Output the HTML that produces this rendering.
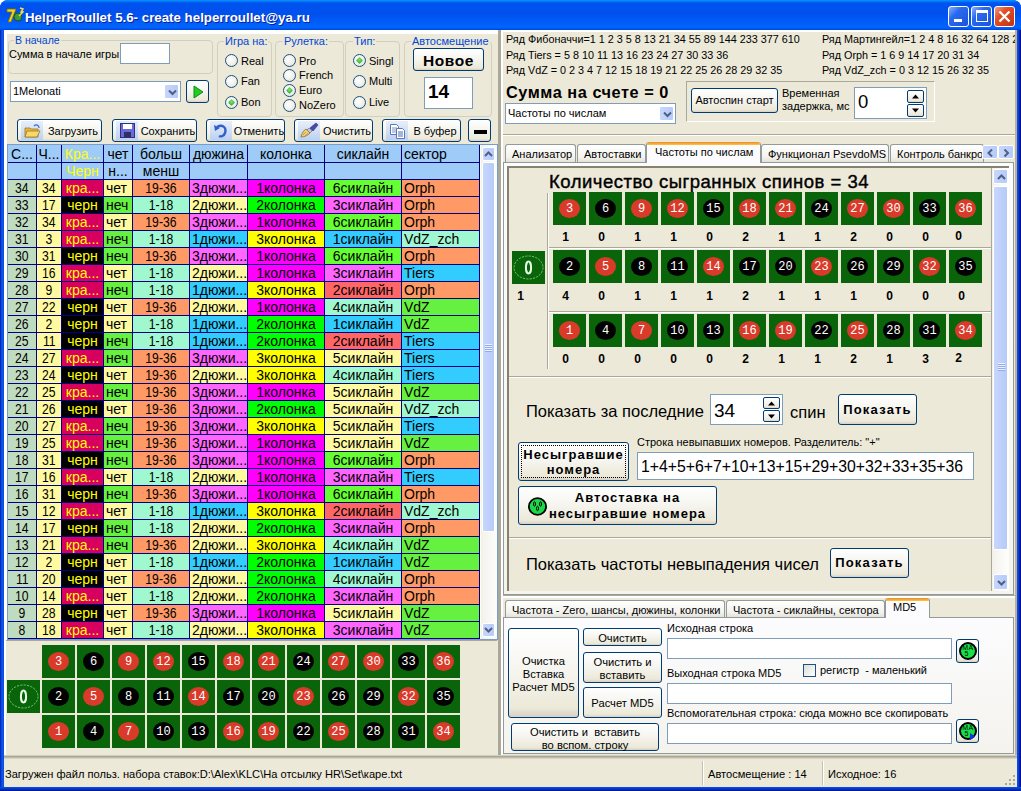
<!DOCTYPE html><html><head><meta charset="utf-8"><style>
*{margin:0;padding:0;box-sizing:border-box}
html,body{width:1021px;height:791px;overflow:hidden;background:#fff;font-family:"Liberation Sans",sans-serif;font-size:11px;color:#000}
div{position:absolute}
.t{white-space:nowrap;line-height:13px}
.btn{border:1px solid #003c74;border-radius:3px;background:linear-gradient(#fff 0%,#f5f4ee 50%,#ece9d8 90%,#d6d0c5 100%);}
.inp{background:#fff;border:1px solid #7f9db9}
.grp{border:1px solid #d0d0bf;border-radius:4px}
.gt{color:#0046d5;background:#ece9d8;padding:0 1px}
.radio{width:13px;height:13px;border-radius:50%;border:1px solid #1c5180;background:radial-gradient(circle at 40% 40%,#fff 0%,#eeeee8 60%,#d4d4cc 100%)}
.radio.on::after{content:"";position:absolute;left:3px;top:3px;width:5px;height:5px;border-radius:1px;transform:rotate(45deg);background:radial-gradient(circle at 40% 40%,#7ee86a,#21a121)}
.cell{overflow:hidden;white-space:nowrap;line-height:16px}
.rc{background:#0a640a}
.ball{border-radius:50%;color:#fff;font-size:12px;font-weight:normal;text-align:center;line-height:21px;font-family:"Liberation Mono",monospace;letter-spacing:0px;text-indent:0px}
.red{background:#d93a2a}
.blk{background:#000}
.cnt{font-weight:bold;font-size:12px;text-align:center;width:33px}
.sb{background:linear-gradient(to right,#f3f1ec,#fefefb)}
.arr{border:1px solid #fff;border-radius:2px;background:linear-gradient(to right,#c8d6fb,#b6cbf9)}
.tab{border:1px solid #919b9c;border-bottom:none;border-radius:3px 3px 0 0;background:linear-gradient(#fff,#f4f3ee 70%,#e4e2d8)}
</style></head><body><div style="left:0px;top:0px;width:1021px;height:791px;background:#0831d9;border-radius:8px 8px 0 0"></div><div style="left:0px;top:0px;width:1021px;height:30px;border-radius:8px 8px 0 0;background:linear-gradient(#0997ff 0%,#0053ee 10%,#0050ee 45%,#0062fa 85%,#0066ff 90%,#0053ee 97%,#003dd7 100%)"></div><div style="left:0px;top:30px;width:4px;height:761px;background:linear-gradient(to right,#001ea0,#0a48e0 35%,#0c5af0 70%,#0848dc)"></div><div style="left:1017px;top:30px;width:4px;height:761px;background:linear-gradient(to right,#0850f8,#0840e0 35%,#0020a8 65%,#000c80)"></div><div style="left:0px;top:787px;width:1021px;height:4px;background:linear-gradient(#0a50e8,#0038c8 50%,#00128a)"></div><div style="left:4px;top:30px;width:1013px;height:757px;background:#ece9d8"></div><div style="left:6px;top:7px;width:18px;height:18px"><svg width="18" height="18" viewBox="0 0 18 18"><path d="M1 2h9l-5 13H2l4-10H1z" fill="#e8d820" stroke="#8a6a00" stroke-width="0.8"/><circle cx="12" cy="10" r="4" fill="#3a9a3a" stroke="#204020" stroke-width="0.8"/><path d="M14 1l3 1-2 3 2 0-4 4" fill="none" stroke="#f0e040" stroke-width="1.4"/></svg></div><div class="t" style="left:25px;top:9px;color:#fff;font-weight:bold;font-size:13.3px;line-height:17px;text-shadow:1px 1px #0a1e9a">HelperRoullet 5.6- create helperroullet@ya.ru</div><div style="left:948px;top:6px;width:21px;height:21px;border:1px solid #fff;border-radius:3px;background:linear-gradient(135deg,#8ab0ff 0%,#2a6af0 35%,#1a52d8 100%)"><div style="left:5px;top:12px;width:8px;height:3px;background:#fff"></div></div><div style="left:971px;top:6px;width:21px;height:21px;border:1px solid #fff;border-radius:3px;background:linear-gradient(135deg,#8ab0ff 0%,#2a6af0 35%,#1a52d8 100%)"><div style="left:4px;top:3px;width:12px;height:12px;border:1px solid #fff;border-top-width:3px"></div></div><div style="left:994px;top:6px;width:21px;height:21px;border:1px solid #fff;border-radius:3px;background:linear-gradient(135deg,#f0a080 0%,#e0502a 35%,#c83010 100%)"><svg style="position:absolute;left:0;top:0" width="21" height="21"><path d="M4.5 4.5L14.5 14.5M14.5 4.5L4.5 14.5" stroke="#fff" stroke-width="2.3"/></svg></div><div style="left:4px;top:30px;width:2px;height:727px;background:#fff"></div><div style="left:6px;top:30px;width:492px;height:4px;background:#fff"></div><div style="left:6px;top:34px;width:1px;height:606px;background:#fff"></div><div class="grp" style="left:8px;top:40px;width:205px;height:34px;"></div><div class="t" style="left:14px;top:34px;color:#0046d5;background:#ece9d8;padding:0 1px;font-size:10.5px;line-height:12px">В начале</div><div class="t" style="left:9px;top:48px;line-height:13px">Сумма в начале игры</div><div class="inp" style="left:120px;top:43px;width:50px;height:21px;"></div><div class="inp" style="left:10px;top:81px;width:171px;height:21px"><div class="t" style="left:2px;top:3px">1Melonati</div><div class="arr" style="left:153px;top:2px;width:15px;height:15px"><svg style="position:absolute;left:3px;top:4px" width="9" height="7"><path d="M1 1.5l3.5 3.5 3.5-3.5" fill="none" stroke="#4d6185" stroke-width="2"/></svg></div></div><div class="btn" style="left:186px;top:80px;width:23px;height:23px"><svg style="position:absolute;left:6px;top:4px" width="12" height="14"><path d="M1 1l9 6-9 6z" fill="#22cc22" stroke="#138a13" stroke-width="1"/></svg></div><div class="grp" style="left:217px;top:41px;width:55px;height:76px"></div><div class="t" style="left:224px;top:34px;color:#0046d5;background:#ece9d8;padding:0 1px;font-size:11px;line-height:14px">Игра на:</div><div class="radio" style="left:225px;top:54px"></div><div class="t" style="left:241px;top:54px;font-size:11px;line-height:14px">Real</div><div class="radio" style="left:225px;top:75px"></div><div class="t" style="left:241px;top:74px;font-size:11px;line-height:14px">Fan</div><div class="radio on" style="left:225px;top:96px"></div><div class="t" style="left:241px;top:95px;font-size:11px;line-height:14px">Bon</div><div class="grp" style="left:275px;top:41px;width:69px;height:76px"></div><div class="t" style="left:283px;top:34px;color:#0046d5;background:#ece9d8;padding:0 1px;font-size:11px;line-height:14px">Рулетка:</div><div class="radio" style="left:283px;top:54px"></div><div class="t" style="left:299px;top:54px;font-size:11px;line-height:14px">Pro</div><div class="radio" style="left:283px;top:69px"></div><div class="t" style="left:299px;top:68px;font-size:11px;line-height:14px">French</div><div class="radio on" style="left:283px;top:84px"></div><div class="t" style="left:299px;top:83px;font-size:11px;line-height:14px">Euro</div><div class="radio" style="left:283px;top:99px"></div><div class="t" style="left:299px;top:98px;font-size:11px;line-height:14px">NoZero</div><div class="grp" style="left:345px;top:41px;width:55px;height:76px"></div><div class="t" style="left:353px;top:34px;color:#0046d5;background:#ece9d8;padding:0 1px;font-size:11px;line-height:14px">Тип:</div><div class="radio on" style="left:353px;top:54px"></div><div class="t" style="left:369px;top:54px;font-size:11px;line-height:14px">Singl</div><div class="radio" style="left:353px;top:75px"></div><div class="t" style="left:369px;top:74px;font-size:11px;line-height:14px">Multi</div><div class="radio" style="left:353px;top:96px"></div><div class="t" style="left:369px;top:95px;font-size:11px;line-height:14px">Live</div><div class="grp" style="left:404px;top:41px;width:88px;height:76px"></div><div class="t" style="left:411px;top:34px;color:#0046d5;background:#ece9d8;padding:0 1px;font-size:11px;line-height:14px">Автосмещение</div><div class="btn" style="left:413px;top:48px;width:71px;height:23px"><div class="t" style="left:0;width:69px;top:3px;text-align:center;font-size:15.5px;font-weight:bold;letter-spacing:0.6px;line-height:17px">Новое</div></div><div class="inp" style="left:424px;top:77px;width:49px;height:32px"><div class="t" style="left:3px;top:4px;font-size:19px;font-weight:bold;line-height:20px">14</div></div><div class="btn" style="left:17px;top:119px;width:85px;height:23px"><div style="left:3px;top:1px;width:22px;height:19px;background:linear-gradient(#e8effa,#bcd0f2)"><svg style="position:absolute;left:3px;top:2px" width="18" height="16"><path d="M1 5h5l1 1h7v8H1z" fill="#e8b840" stroke="#a07820" stroke-width="0.8"/><path d="M3 8h13l-3 6H1z" fill="#f8d868" stroke="#a07820" stroke-width="0.8"/><path d="M10 3c2-2 5-1 5 2" fill="none" stroke="#3070d0" stroke-width="1.2"/></svg></div><div class="t" style="left:26px;width:58px;text-align:center;top:4px;font-size:11px;line-height:14px">Загрузить</div></div><div class="btn" style="left:112px;top:119px;width:85px;height:23px"><div style="left:3px;top:1px;width:22px;height:19px;background:linear-gradient(#e8effa,#bcd0f2)"><svg style="position:absolute;left:4px;top:2px" width="15" height="15"><rect x="0.5" y="0.5" width="14" height="14" fill="#6a6ad8" stroke="#303080"/><rect x="3" y="1" width="9" height="5" fill="#fff"/><rect x="4" y="9" width="7" height="5" fill="#303060"/></svg></div><div class="t" style="left:26px;width:58px;text-align:center;top:4px;font-size:11px;line-height:14px">Сохранить</div></div><div class="btn" style="left:206px;top:119px;width:79px;height:23px"><div style="left:3px;top:1px;width:22px;height:19px;background:linear-gradient(#e8effa,#bcd0f2)"><svg style="position:absolute;left:3px;top:2px" width="16" height="15"><path d="M4 4c5-3 10 0 8 6-1 3-4 4-6 3" fill="none" stroke="#3060c8" stroke-width="2.4"/><path d="M1 2l1 6 5-3z" fill="#3060c8"/></svg></div><div class="t" style="left:26px;width:52px;text-align:center;top:4px;font-size:11px;line-height:14px">Отменить</div></div><div class="btn" style="left:294px;top:119px;width:79px;height:23px"><div style="left:3px;top:1px;width:22px;height:19px;background:linear-gradient(#e8effa,#bcd0f2)"><svg style="position:absolute;left:2px;top:1px" width="19" height="17"><path d="M1 15c1-4 3-7 5-8l4 4c-2 2-5 4-9 4z" fill="#f0d070" stroke="#8a7030" stroke-width="0.8"/><path d="M3 13l3-3M5 14l3-3" stroke="#b09040" stroke-width="0.7"/><path d="M7 8l2-2 3 3-2 2z" fill="#c8c8d8" stroke="#606080" stroke-width="0.6"/><path d="M10 6l6-5 2 2-5 6z" fill="#4a4aa8" stroke="#2a2a70" stroke-width="0.6"/></svg></div><div class="t" style="left:26px;width:52px;text-align:center;top:4px;font-size:11px;line-height:14px">Очистить</div></div><div class="btn" style="left:382px;top:119px;width:79px;height:23px"><div style="left:3px;top:1px;width:22px;height:19px;background:linear-gradient(#e8effa,#bcd0f2)"><svg style="position:absolute;left:3px;top:2px" width="17" height="16"><path d="M1.5 1.5h6l2 2v8h-8z" fill="#fff" stroke="#5a78b8"/><path d="M3 5h5M3 7h5M3 9h5" stroke="#5a78b8" stroke-width="0.8"/><path d="M7.5 5.5h6l2 2v8h-8z" fill="#fff" stroke="#5a78b8"/><path d="M9 9h5M9 11h5M9 13h5" stroke="#3a58a8" stroke-width="0.9"/></svg></div><div class="t" style="left:26px;width:52px;text-align:center;top:4px;font-size:11px;line-height:14px">В буфер</div></div><div class="btn" style="left:468px;top:119px;width:23px;height:23px"><div style="left:5px;top:10px;width:13px;height:4px;background:#000"></div></div><div style="left:7px;top:144px;width:491px;height:496px;border:1px solid #7a9ccc;background:#ece9d8"></div><div style="left:8px;top:145px;width:472px;height:494px;background:#000080"></div><div style="left:480px;top:145px;width:1px;height:494px;background:#fffff0"></div><div class="cell" style="left:8px;top:145px;width:28px;height:17px;background:#9ecbf8;color:#000;text-align:center;padding-left:0px;padding-top:2px;font-size:14px;line-height:15px">С...</div><div class="cell" style="left:37px;top:145px;width:24px;height:17px;background:#9ecbf8;color:#000;text-align:center;padding-left:0px;padding-top:2px;font-size:14px;line-height:15px">Ч...</div><div class="cell" style="left:62px;top:145px;width:41px;height:17px;background:#9ecbf8;color:#ffff00;text-align:center;padding-left:0px;padding-top:2px;font-size:14px;line-height:15px">Кра...</div><div class="cell" style="left:104px;top:145px;width:28px;height:17px;background:#9ecbf8;color:#000;text-align:center;padding-left:0px;padding-top:2px;font-size:14px;line-height:15px">чет</div><div class="cell" style="left:133px;top:145px;width:56px;height:17px;background:#9ecbf8;color:#000;text-align:center;padding-left:0px;padding-top:2px;font-size:14px;line-height:15px">больш</div><div class="cell" style="left:190px;top:145px;width:57px;height:17px;background:#9ecbf8;color:#000;text-align:center;padding-left:0px;padding-top:2px;font-size:14px;line-height:15px">дюжина</div><div class="cell" style="left:248px;top:145px;width:76px;height:17px;background:#9ecbf8;color:#000;text-align:center;padding-left:0px;padding-top:2px;font-size:14px;line-height:15px">колонка</div><div class="cell" style="left:325px;top:145px;width:76px;height:17px;background:#9ecbf8;color:#000;text-align:center;padding-left:0px;padding-top:2px;font-size:14px;line-height:15px">сиклайн</div><div class="cell" style="left:402px;top:145px;width:77px;height:17px;background:#9ecbf8;color:#000;text-align:left;padding-left:2px;padding-top:2px;font-size:14px;line-height:15px">сектор</div><div class="cell" style="left:8px;top:163px;width:28px;height:16px;background:#9ecbf8;color:#000;text-align:center;padding-left:0px;padding-top:1px;font-size:14px;line-height:15px"></div><div class="cell" style="left:37px;top:163px;width:24px;height:16px;background:#9ecbf8;color:#000;text-align:center;padding-left:0px;padding-top:1px;font-size:14px;line-height:15px"></div><div class="cell" style="left:62px;top:163px;width:41px;height:16px;background:#9ecbf8;color:#ffff00;text-align:center;padding-left:0px;padding-top:1px;font-size:14px;line-height:15px">Черн</div><div class="cell" style="left:104px;top:163px;width:28px;height:16px;background:#9ecbf8;color:#000;text-align:center;padding-left:0px;padding-top:1px;font-size:14px;line-height:15px">н...</div><div class="cell" style="left:133px;top:163px;width:56px;height:16px;background:#9ecbf8;color:#000;text-align:center;padding-left:0px;padding-top:1px;font-size:14px;line-height:15px">менш</div><div class="cell" style="left:190px;top:163px;width:57px;height:16px;background:#9ecbf8;color:#000;text-align:center;padding-left:0px;padding-top:1px;font-size:14px;line-height:15px"></div><div class="cell" style="left:248px;top:163px;width:76px;height:16px;background:#9ecbf8;color:#000;text-align:center;padding-left:0px;padding-top:1px;font-size:14px;line-height:15px"></div><div class="cell" style="left:325px;top:163px;width:76px;height:16px;background:#9ecbf8;color:#000;text-align:center;padding-left:0px;padding-top:1px;font-size:14px;line-height:15px"></div><div class="cell" style="left:402px;top:163px;width:77px;height:16px;background:#9ecbf8;color:#000;text-align:left;padding-left:2px;padding-top:1px;font-size:14px;line-height:15px"></div><div class="cell" style="left:8px;top:180px;width:28px;height:16px;background:#c0dcc0;color:#000;text-align:center;padding-left:0px;padding-top:1px;font-size:14px;line-height:15px"><span style="display:inline-block;transform:scaleX(0.87)">34</span></div><div class="cell" style="left:37px;top:180px;width:24px;height:16px;background:#fffaa0;color:#000;text-align:center;padding-left:0px;padding-top:1px;font-size:14px;line-height:15px"><span style="display:inline-block;transform:scaleX(0.87)">34</span></div><div class="cell" style="left:62px;top:180px;width:41px;height:16px;background:#d8005e;color:#ffff00;text-align:center;padding-left:0px;padding-top:1px;font-size:14px;line-height:15px">кра...</div><div class="cell" style="left:104px;top:180px;width:28px;height:16px;background:#fffaa0;color:#000;text-align:left;padding-left:2px;padding-top:1px;font-size:14px;line-height:15px">чет</div><div class="cell" style="left:133px;top:180px;width:56px;height:16px;background:#ff9966;color:#000;text-align:center;padding-left:0px;padding-top:1px;font-size:14px;line-height:15px"><span style="display:inline-block;transform:scaleX(0.87)">19-36</span></div><div class="cell" style="left:190px;top:180px;width:57px;height:16px;background:#ff66ff;color:#000;text-align:left;padding-left:2px;padding-top:1px;font-size:14px;line-height:15px">3дюжи...</div><div class="cell" style="left:248px;top:180px;width:76px;height:16px;background:#ff00ff;color:#000;text-align:center;padding-left:0px;padding-top:1px;font-size:14px;line-height:15px">1колонка</div><div class="cell" style="left:325px;top:180px;width:76px;height:16px;background:#66ff33;color:#000;text-align:center;padding-left:0px;padding-top:1px;font-size:14px;line-height:15px">6сиклайн</div><div class="cell" style="left:402px;top:180px;width:77px;height:16px;background:#ff9966;color:#000;text-align:left;padding-left:2px;padding-top:1px;font-size:14px;line-height:15px">Orph</div><div class="cell" style="left:8px;top:197px;width:28px;height:16px;background:#c0dcc0;color:#000;text-align:center;padding-left:0px;padding-top:1px;font-size:14px;line-height:15px"><span style="display:inline-block;transform:scaleX(0.87)">33</span></div><div class="cell" style="left:37px;top:197px;width:24px;height:16px;background:#fffaa0;color:#000;text-align:center;padding-left:0px;padding-top:1px;font-size:14px;line-height:15px"><span style="display:inline-block;transform:scaleX(0.87)">17</span></div><div class="cell" style="left:62px;top:197px;width:41px;height:16px;background:#000;color:#ffff00;text-align:center;padding-left:0px;padding-top:1px;font-size:14px;line-height:15px">черн</div><div class="cell" style="left:104px;top:197px;width:28px;height:16px;background:#66f040;color:#000;text-align:left;padding-left:2px;padding-top:1px;font-size:14px;line-height:15px">неч</div><div class="cell" style="left:133px;top:197px;width:56px;height:16px;background:#a0f8d0;color:#000;text-align:center;padding-left:0px;padding-top:1px;font-size:14px;line-height:15px"><span style="display:inline-block;transform:scaleX(0.87)">1-18</span></div><div class="cell" style="left:190px;top:197px;width:57px;height:16px;background:#fffaa0;color:#000;text-align:left;padding-left:2px;padding-top:1px;font-size:14px;line-height:15px">2дюжи...</div><div class="cell" style="left:248px;top:197px;width:76px;height:16px;background:#00ff00;color:#000;text-align:center;padding-left:0px;padding-top:1px;font-size:14px;line-height:15px">2колонка</div><div class="cell" style="left:325px;top:197px;width:76px;height:16px;background:#ff66ff;color:#000;text-align:center;padding-left:0px;padding-top:1px;font-size:14px;line-height:15px">3сиклайн</div><div class="cell" style="left:402px;top:197px;width:77px;height:16px;background:#ff9966;color:#000;text-align:left;padding-left:2px;padding-top:1px;font-size:14px;line-height:15px">Orph</div><div class="cell" style="left:8px;top:214px;width:28px;height:16px;background:#c0dcc0;color:#000;text-align:center;padding-left:0px;padding-top:1px;font-size:14px;line-height:15px"><span style="display:inline-block;transform:scaleX(0.87)">32</span></div><div class="cell" style="left:37px;top:214px;width:24px;height:16px;background:#fffaa0;color:#000;text-align:center;padding-left:0px;padding-top:1px;font-size:14px;line-height:15px"><span style="display:inline-block;transform:scaleX(0.87)">34</span></div><div class="cell" style="left:62px;top:214px;width:41px;height:16px;background:#d8005e;color:#ffff00;text-align:center;padding-left:0px;padding-top:1px;font-size:14px;line-height:15px">кра...</div><div class="cell" style="left:104px;top:214px;width:28px;height:16px;background:#fffaa0;color:#000;text-align:left;padding-left:2px;padding-top:1px;font-size:14px;line-height:15px">чет</div><div class="cell" style="left:133px;top:214px;width:56px;height:16px;background:#ff9966;color:#000;text-align:center;padding-left:0px;padding-top:1px;font-size:14px;line-height:15px"><span style="display:inline-block;transform:scaleX(0.87)">19-36</span></div><div class="cell" style="left:190px;top:214px;width:57px;height:16px;background:#ff66ff;color:#000;text-align:left;padding-left:2px;padding-top:1px;font-size:14px;line-height:15px">3дюжи...</div><div class="cell" style="left:248px;top:214px;width:76px;height:16px;background:#ff00ff;color:#000;text-align:center;padding-left:0px;padding-top:1px;font-size:14px;line-height:15px">1колонка</div><div class="cell" style="left:325px;top:214px;width:76px;height:16px;background:#66ff33;color:#000;text-align:center;padding-left:0px;padding-top:1px;font-size:14px;line-height:15px">6сиклайн</div><div class="cell" style="left:402px;top:214px;width:77px;height:16px;background:#ff9966;color:#000;text-align:left;padding-left:2px;padding-top:1px;font-size:14px;line-height:15px">Orph</div><div class="cell" style="left:8px;top:231px;width:28px;height:16px;background:#c0dcc0;color:#000;text-align:center;padding-left:0px;padding-top:1px;font-size:14px;line-height:15px"><span style="display:inline-block;transform:scaleX(0.87)">31</span></div><div class="cell" style="left:37px;top:231px;width:24px;height:16px;background:#fffaa0;color:#000;text-align:center;padding-left:0px;padding-top:1px;font-size:14px;line-height:15px"><span style="display:inline-block;transform:scaleX(0.87)">3</span></div><div class="cell" style="left:62px;top:231px;width:41px;height:16px;background:#d8005e;color:#ffff00;text-align:center;padding-left:0px;padding-top:1px;font-size:14px;line-height:15px">кра...</div><div class="cell" style="left:104px;top:231px;width:28px;height:16px;background:#66f040;color:#000;text-align:left;padding-left:2px;padding-top:1px;font-size:14px;line-height:15px">неч</div><div class="cell" style="left:133px;top:231px;width:56px;height:16px;background:#a0f8d0;color:#000;text-align:center;padding-left:0px;padding-top:1px;font-size:14px;line-height:15px"><span style="display:inline-block;transform:scaleX(0.87)">1-18</span></div><div class="cell" style="left:190px;top:231px;width:57px;height:16px;background:#33ccff;color:#000;text-align:left;padding-left:2px;padding-top:1px;font-size:14px;line-height:15px">1дюжи...</div><div class="cell" style="left:248px;top:231px;width:76px;height:16px;background:#ffff00;color:#000;text-align:center;padding-left:0px;padding-top:1px;font-size:14px;line-height:15px">3колонка</div><div class="cell" style="left:325px;top:231px;width:76px;height:16px;background:#33ccff;color:#000;text-align:center;padding-left:0px;padding-top:1px;font-size:14px;line-height:15px">1сиклайн</div><div class="cell" style="left:402px;top:231px;width:77px;height:16px;background:#a0f8d0;color:#000;text-align:left;padding-left:2px;padding-top:1px;font-size:14px;line-height:15px">VdZ_zch</div><div class="cell" style="left:8px;top:248px;width:28px;height:16px;background:#c0dcc0;color:#000;text-align:center;padding-left:0px;padding-top:1px;font-size:14px;line-height:15px"><span style="display:inline-block;transform:scaleX(0.87)">30</span></div><div class="cell" style="left:37px;top:248px;width:24px;height:16px;background:#fffaa0;color:#000;text-align:center;padding-left:0px;padding-top:1px;font-size:14px;line-height:15px"><span style="display:inline-block;transform:scaleX(0.87)">31</span></div><div class="cell" style="left:62px;top:248px;width:41px;height:16px;background:#000;color:#ffff00;text-align:center;padding-left:0px;padding-top:1px;font-size:14px;line-height:15px">черн</div><div class="cell" style="left:104px;top:248px;width:28px;height:16px;background:#66f040;color:#000;text-align:left;padding-left:2px;padding-top:1px;font-size:14px;line-height:15px">неч</div><div class="cell" style="left:133px;top:248px;width:56px;height:16px;background:#ff9966;color:#000;text-align:center;padding-left:0px;padding-top:1px;font-size:14px;line-height:15px"><span style="display:inline-block;transform:scaleX(0.87)">19-36</span></div><div class="cell" style="left:190px;top:248px;width:57px;height:16px;background:#ff66ff;color:#000;text-align:left;padding-left:2px;padding-top:1px;font-size:14px;line-height:15px">3дюжи...</div><div class="cell" style="left:248px;top:248px;width:76px;height:16px;background:#ff00ff;color:#000;text-align:center;padding-left:0px;padding-top:1px;font-size:14px;line-height:15px">1колонка</div><div class="cell" style="left:325px;top:248px;width:76px;height:16px;background:#66ff33;color:#000;text-align:center;padding-left:0px;padding-top:1px;font-size:14px;line-height:15px">6сиклайн</div><div class="cell" style="left:402px;top:248px;width:77px;height:16px;background:#ff9966;color:#000;text-align:left;padding-left:2px;padding-top:1px;font-size:14px;line-height:15px">Orph</div><div class="cell" style="left:8px;top:265px;width:28px;height:16px;background:#c0dcc0;color:#000;text-align:center;padding-left:0px;padding-top:1px;font-size:14px;line-height:15px"><span style="display:inline-block;transform:scaleX(0.87)">29</span></div><div class="cell" style="left:37px;top:265px;width:24px;height:16px;background:#fffaa0;color:#000;text-align:center;padding-left:0px;padding-top:1px;font-size:14px;line-height:15px"><span style="display:inline-block;transform:scaleX(0.87)">16</span></div><div class="cell" style="left:62px;top:265px;width:41px;height:16px;background:#d8005e;color:#ffff00;text-align:center;padding-left:0px;padding-top:1px;font-size:14px;line-height:15px">кра...</div><div class="cell" style="left:104px;top:265px;width:28px;height:16px;background:#fffaa0;color:#000;text-align:left;padding-left:2px;padding-top:1px;font-size:14px;line-height:15px">чет</div><div class="cell" style="left:133px;top:265px;width:56px;height:16px;background:#a0f8d0;color:#000;text-align:center;padding-left:0px;padding-top:1px;font-size:14px;line-height:15px"><span style="display:inline-block;transform:scaleX(0.87)">1-18</span></div><div class="cell" style="left:190px;top:265px;width:57px;height:16px;background:#fffaa0;color:#000;text-align:left;padding-left:2px;padding-top:1px;font-size:14px;line-height:15px">2дюжи...</div><div class="cell" style="left:248px;top:265px;width:76px;height:16px;background:#ff00ff;color:#000;text-align:center;padding-left:0px;padding-top:1px;font-size:14px;line-height:15px">1колонка</div><div class="cell" style="left:325px;top:265px;width:76px;height:16px;background:#ff66ff;color:#000;text-align:center;padding-left:0px;padding-top:1px;font-size:14px;line-height:15px">3сиклайн</div><div class="cell" style="left:402px;top:265px;width:77px;height:16px;background:#33ccff;color:#000;text-align:left;padding-left:2px;padding-top:1px;font-size:14px;line-height:15px">Tiers</div><div class="cell" style="left:8px;top:282px;width:28px;height:16px;background:#c0dcc0;color:#000;text-align:center;padding-left:0px;padding-top:1px;font-size:14px;line-height:15px"><span style="display:inline-block;transform:scaleX(0.87)">28</span></div><div class="cell" style="left:37px;top:282px;width:24px;height:16px;background:#fffaa0;color:#000;text-align:center;padding-left:0px;padding-top:1px;font-size:14px;line-height:15px"><span style="display:inline-block;transform:scaleX(0.87)">9</span></div><div class="cell" style="left:62px;top:282px;width:41px;height:16px;background:#d8005e;color:#ffff00;text-align:center;padding-left:0px;padding-top:1px;font-size:14px;line-height:15px">кра...</div><div class="cell" style="left:104px;top:282px;width:28px;height:16px;background:#66f040;color:#000;text-align:left;padding-left:2px;padding-top:1px;font-size:14px;line-height:15px">неч</div><div class="cell" style="left:133px;top:282px;width:56px;height:16px;background:#a0f8d0;color:#000;text-align:center;padding-left:0px;padding-top:1px;font-size:14px;line-height:15px"><span style="display:inline-block;transform:scaleX(0.87)">1-18</span></div><div class="cell" style="left:190px;top:282px;width:57px;height:16px;background:#33ccff;color:#000;text-align:left;padding-left:2px;padding-top:1px;font-size:14px;line-height:15px">1дюжи...</div><div class="cell" style="left:248px;top:282px;width:76px;height:16px;background:#ffff00;color:#000;text-align:center;padding-left:0px;padding-top:1px;font-size:14px;line-height:15px">3колонка</div><div class="cell" style="left:325px;top:282px;width:76px;height:16px;background:#ff6666;color:#000;text-align:center;padding-left:0px;padding-top:1px;font-size:14px;line-height:15px">2сиклайн</div><div class="cell" style="left:402px;top:282px;width:77px;height:16px;background:#ff9966;color:#000;text-align:left;padding-left:2px;padding-top:1px;font-size:14px;line-height:15px">Orph</div><div class="cell" style="left:8px;top:299px;width:28px;height:16px;background:#c0dcc0;color:#000;text-align:center;padding-left:0px;padding-top:1px;font-size:14px;line-height:15px"><span style="display:inline-block;transform:scaleX(0.87)">27</span></div><div class="cell" style="left:37px;top:299px;width:24px;height:16px;background:#fffaa0;color:#000;text-align:center;padding-left:0px;padding-top:1px;font-size:14px;line-height:15px"><span style="display:inline-block;transform:scaleX(0.87)">22</span></div><div class="cell" style="left:62px;top:299px;width:41px;height:16px;background:#000;color:#ffff00;text-align:center;padding-left:0px;padding-top:1px;font-size:14px;line-height:15px">черн</div><div class="cell" style="left:104px;top:299px;width:28px;height:16px;background:#fffaa0;color:#000;text-align:left;padding-left:2px;padding-top:1px;font-size:14px;line-height:15px">чет</div><div class="cell" style="left:133px;top:299px;width:56px;height:16px;background:#ff9966;color:#000;text-align:center;padding-left:0px;padding-top:1px;font-size:14px;line-height:15px"><span style="display:inline-block;transform:scaleX(0.87)">19-36</span></div><div class="cell" style="left:190px;top:299px;width:57px;height:16px;background:#fffaa0;color:#000;text-align:left;padding-left:2px;padding-top:1px;font-size:14px;line-height:15px">2дюжи...</div><div class="cell" style="left:248px;top:299px;width:76px;height:16px;background:#ff00ff;color:#000;text-align:center;padding-left:0px;padding-top:1px;font-size:14px;line-height:15px">1колонка</div><div class="cell" style="left:325px;top:299px;width:76px;height:16px;background:#a0f8d0;color:#000;text-align:center;padding-left:0px;padding-top:1px;font-size:14px;line-height:15px">4сиклайн</div><div class="cell" style="left:402px;top:299px;width:77px;height:16px;background:#66f040;color:#000;text-align:left;padding-left:2px;padding-top:1px;font-size:14px;line-height:15px">VdZ</div><div class="cell" style="left:8px;top:316px;width:28px;height:16px;background:#c0dcc0;color:#000;text-align:center;padding-left:0px;padding-top:1px;font-size:14px;line-height:15px"><span style="display:inline-block;transform:scaleX(0.87)">26</span></div><div class="cell" style="left:37px;top:316px;width:24px;height:16px;background:#fffaa0;color:#000;text-align:center;padding-left:0px;padding-top:1px;font-size:14px;line-height:15px"><span style="display:inline-block;transform:scaleX(0.87)">2</span></div><div class="cell" style="left:62px;top:316px;width:41px;height:16px;background:#000;color:#ffff00;text-align:center;padding-left:0px;padding-top:1px;font-size:14px;line-height:15px">черн</div><div class="cell" style="left:104px;top:316px;width:28px;height:16px;background:#fffaa0;color:#000;text-align:left;padding-left:2px;padding-top:1px;font-size:14px;line-height:15px">чет</div><div class="cell" style="left:133px;top:316px;width:56px;height:16px;background:#a0f8d0;color:#000;text-align:center;padding-left:0px;padding-top:1px;font-size:14px;line-height:15px"><span style="display:inline-block;transform:scaleX(0.87)">1-18</span></div><div class="cell" style="left:190px;top:316px;width:57px;height:16px;background:#33ccff;color:#000;text-align:left;padding-left:2px;padding-top:1px;font-size:14px;line-height:15px">1дюжи...</div><div class="cell" style="left:248px;top:316px;width:76px;height:16px;background:#00ff00;color:#000;text-align:center;padding-left:0px;padding-top:1px;font-size:14px;line-height:15px">2колонка</div><div class="cell" style="left:325px;top:316px;width:76px;height:16px;background:#33ccff;color:#000;text-align:center;padding-left:0px;padding-top:1px;font-size:14px;line-height:15px">1сиклайн</div><div class="cell" style="left:402px;top:316px;width:77px;height:16px;background:#66f040;color:#000;text-align:left;padding-left:2px;padding-top:1px;font-size:14px;line-height:15px">VdZ</div><div class="cell" style="left:8px;top:333px;width:28px;height:16px;background:#c0dcc0;color:#000;text-align:center;padding-left:0px;padding-top:1px;font-size:14px;line-height:15px"><span style="display:inline-block;transform:scaleX(0.87)">25</span></div><div class="cell" style="left:37px;top:333px;width:24px;height:16px;background:#fffaa0;color:#000;text-align:center;padding-left:0px;padding-top:1px;font-size:14px;line-height:15px"><span style="display:inline-block;transform:scaleX(0.87)">11</span></div><div class="cell" style="left:62px;top:333px;width:41px;height:16px;background:#000;color:#ffff00;text-align:center;padding-left:0px;padding-top:1px;font-size:14px;line-height:15px">черн</div><div class="cell" style="left:104px;top:333px;width:28px;height:16px;background:#66f040;color:#000;text-align:left;padding-left:2px;padding-top:1px;font-size:14px;line-height:15px">неч</div><div class="cell" style="left:133px;top:333px;width:56px;height:16px;background:#a0f8d0;color:#000;text-align:center;padding-left:0px;padding-top:1px;font-size:14px;line-height:15px"><span style="display:inline-block;transform:scaleX(0.87)">1-18</span></div><div class="cell" style="left:190px;top:333px;width:57px;height:16px;background:#33ccff;color:#000;text-align:left;padding-left:2px;padding-top:1px;font-size:14px;line-height:15px">1дюжи...</div><div class="cell" style="left:248px;top:333px;width:76px;height:16px;background:#00ff00;color:#000;text-align:center;padding-left:0px;padding-top:1px;font-size:14px;line-height:15px">2колонка</div><div class="cell" style="left:325px;top:333px;width:76px;height:16px;background:#ff6666;color:#000;text-align:center;padding-left:0px;padding-top:1px;font-size:14px;line-height:15px">2сиклайн</div><div class="cell" style="left:402px;top:333px;width:77px;height:16px;background:#33ccff;color:#000;text-align:left;padding-left:2px;padding-top:1px;font-size:14px;line-height:15px">Tiers</div><div class="cell" style="left:8px;top:350px;width:28px;height:16px;background:#c0dcc0;color:#000;text-align:center;padding-left:0px;padding-top:1px;font-size:14px;line-height:15px"><span style="display:inline-block;transform:scaleX(0.87)">24</span></div><div class="cell" style="left:37px;top:350px;width:24px;height:16px;background:#fffaa0;color:#000;text-align:center;padding-left:0px;padding-top:1px;font-size:14px;line-height:15px"><span style="display:inline-block;transform:scaleX(0.87)">27</span></div><div class="cell" style="left:62px;top:350px;width:41px;height:16px;background:#d8005e;color:#ffff00;text-align:center;padding-left:0px;padding-top:1px;font-size:14px;line-height:15px">кра...</div><div class="cell" style="left:104px;top:350px;width:28px;height:16px;background:#66f040;color:#000;text-align:left;padding-left:2px;padding-top:1px;font-size:14px;line-height:15px">неч</div><div class="cell" style="left:133px;top:350px;width:56px;height:16px;background:#ff9966;color:#000;text-align:center;padding-left:0px;padding-top:1px;font-size:14px;line-height:15px"><span style="display:inline-block;transform:scaleX(0.87)">19-36</span></div><div class="cell" style="left:190px;top:350px;width:57px;height:16px;background:#ff66ff;color:#000;text-align:left;padding-left:2px;padding-top:1px;font-size:14px;line-height:15px">3дюжи...</div><div class="cell" style="left:248px;top:350px;width:76px;height:16px;background:#ffff00;color:#000;text-align:center;padding-left:0px;padding-top:1px;font-size:14px;line-height:15px">3колонка</div><div class="cell" style="left:325px;top:350px;width:76px;height:16px;background:#fffaa0;color:#000;text-align:center;padding-left:0px;padding-top:1px;font-size:14px;line-height:15px">5сиклайн</div><div class="cell" style="left:402px;top:350px;width:77px;height:16px;background:#33ccff;color:#000;text-align:left;padding-left:2px;padding-top:1px;font-size:14px;line-height:15px">Tiers</div><div class="cell" style="left:8px;top:367px;width:28px;height:16px;background:#c0dcc0;color:#000;text-align:center;padding-left:0px;padding-top:1px;font-size:14px;line-height:15px"><span style="display:inline-block;transform:scaleX(0.87)">23</span></div><div class="cell" style="left:37px;top:367px;width:24px;height:16px;background:#fffaa0;color:#000;text-align:center;padding-left:0px;padding-top:1px;font-size:14px;line-height:15px"><span style="display:inline-block;transform:scaleX(0.87)">24</span></div><div class="cell" style="left:62px;top:367px;width:41px;height:16px;background:#000;color:#ffff00;text-align:center;padding-left:0px;padding-top:1px;font-size:14px;line-height:15px">черн</div><div class="cell" style="left:104px;top:367px;width:28px;height:16px;background:#fffaa0;color:#000;text-align:left;padding-left:2px;padding-top:1px;font-size:14px;line-height:15px">чет</div><div class="cell" style="left:133px;top:367px;width:56px;height:16px;background:#ff9966;color:#000;text-align:center;padding-left:0px;padding-top:1px;font-size:14px;line-height:15px"><span style="display:inline-block;transform:scaleX(0.87)">19-36</span></div><div class="cell" style="left:190px;top:367px;width:57px;height:16px;background:#fffaa0;color:#000;text-align:left;padding-left:2px;padding-top:1px;font-size:14px;line-height:15px">2дюжи...</div><div class="cell" style="left:248px;top:367px;width:76px;height:16px;background:#ffff00;color:#000;text-align:center;padding-left:0px;padding-top:1px;font-size:14px;line-height:15px">3колонка</div><div class="cell" style="left:325px;top:367px;width:76px;height:16px;background:#a0f8d0;color:#000;text-align:center;padding-left:0px;padding-top:1px;font-size:14px;line-height:15px">4сиклайн</div><div class="cell" style="left:402px;top:367px;width:77px;height:16px;background:#33ccff;color:#000;text-align:left;padding-left:2px;padding-top:1px;font-size:14px;line-height:15px">Tiers</div><div class="cell" style="left:8px;top:384px;width:28px;height:16px;background:#c0dcc0;color:#000;text-align:center;padding-left:0px;padding-top:1px;font-size:14px;line-height:15px"><span style="display:inline-block;transform:scaleX(0.87)">22</span></div><div class="cell" style="left:37px;top:384px;width:24px;height:16px;background:#fffaa0;color:#000;text-align:center;padding-left:0px;padding-top:1px;font-size:14px;line-height:15px"><span style="display:inline-block;transform:scaleX(0.87)">25</span></div><div class="cell" style="left:62px;top:384px;width:41px;height:16px;background:#d8005e;color:#ffff00;text-align:center;padding-left:0px;padding-top:1px;font-size:14px;line-height:15px">кра...</div><div class="cell" style="left:104px;top:384px;width:28px;height:16px;background:#66f040;color:#000;text-align:left;padding-left:2px;padding-top:1px;font-size:14px;line-height:15px">неч</div><div class="cell" style="left:133px;top:384px;width:56px;height:16px;background:#ff9966;color:#000;text-align:center;padding-left:0px;padding-top:1px;font-size:14px;line-height:15px"><span style="display:inline-block;transform:scaleX(0.87)">19-36</span></div><div class="cell" style="left:190px;top:384px;width:57px;height:16px;background:#ff66ff;color:#000;text-align:left;padding-left:2px;padding-top:1px;font-size:14px;line-height:15px">3дюжи...</div><div class="cell" style="left:248px;top:384px;width:76px;height:16px;background:#ff00ff;color:#000;text-align:center;padding-left:0px;padding-top:1px;font-size:14px;line-height:15px">1колонка</div><div class="cell" style="left:325px;top:384px;width:76px;height:16px;background:#fffaa0;color:#000;text-align:center;padding-left:0px;padding-top:1px;font-size:14px;line-height:15px">5сиклайн</div><div class="cell" style="left:402px;top:384px;width:77px;height:16px;background:#66f040;color:#000;text-align:left;padding-left:2px;padding-top:1px;font-size:14px;line-height:15px">VdZ</div><div class="cell" style="left:8px;top:401px;width:28px;height:16px;background:#c0dcc0;color:#000;text-align:center;padding-left:0px;padding-top:1px;font-size:14px;line-height:15px"><span style="display:inline-block;transform:scaleX(0.87)">21</span></div><div class="cell" style="left:37px;top:401px;width:24px;height:16px;background:#fffaa0;color:#000;text-align:center;padding-left:0px;padding-top:1px;font-size:14px;line-height:15px"><span style="display:inline-block;transform:scaleX(0.87)">26</span></div><div class="cell" style="left:62px;top:401px;width:41px;height:16px;background:#000;color:#ffff00;text-align:center;padding-left:0px;padding-top:1px;font-size:14px;line-height:15px">черн</div><div class="cell" style="left:104px;top:401px;width:28px;height:16px;background:#fffaa0;color:#000;text-align:left;padding-left:2px;padding-top:1px;font-size:14px;line-height:15px">чет</div><div class="cell" style="left:133px;top:401px;width:56px;height:16px;background:#ff9966;color:#000;text-align:center;padding-left:0px;padding-top:1px;font-size:14px;line-height:15px"><span style="display:inline-block;transform:scaleX(0.87)">19-36</span></div><div class="cell" style="left:190px;top:401px;width:57px;height:16px;background:#ff66ff;color:#000;text-align:left;padding-left:2px;padding-top:1px;font-size:14px;line-height:15px">3дюжи...</div><div class="cell" style="left:248px;top:401px;width:76px;height:16px;background:#00ff00;color:#000;text-align:center;padding-left:0px;padding-top:1px;font-size:14px;line-height:15px">2колонка</div><div class="cell" style="left:325px;top:401px;width:76px;height:16px;background:#fffaa0;color:#000;text-align:center;padding-left:0px;padding-top:1px;font-size:14px;line-height:15px">5сиклайн</div><div class="cell" style="left:402px;top:401px;width:77px;height:16px;background:#a0f8d0;color:#000;text-align:left;padding-left:2px;padding-top:1px;font-size:14px;line-height:15px">VdZ_zch</div><div class="cell" style="left:8px;top:418px;width:28px;height:16px;background:#c0dcc0;color:#000;text-align:center;padding-left:0px;padding-top:1px;font-size:14px;line-height:15px"><span style="display:inline-block;transform:scaleX(0.87)">20</span></div><div class="cell" style="left:37px;top:418px;width:24px;height:16px;background:#fffaa0;color:#000;text-align:center;padding-left:0px;padding-top:1px;font-size:14px;line-height:15px"><span style="display:inline-block;transform:scaleX(0.87)">27</span></div><div class="cell" style="left:62px;top:418px;width:41px;height:16px;background:#d8005e;color:#ffff00;text-align:center;padding-left:0px;padding-top:1px;font-size:14px;line-height:15px">кра...</div><div class="cell" style="left:104px;top:418px;width:28px;height:16px;background:#66f040;color:#000;text-align:left;padding-left:2px;padding-top:1px;font-size:14px;line-height:15px">неч</div><div class="cell" style="left:133px;top:418px;width:56px;height:16px;background:#ff9966;color:#000;text-align:center;padding-left:0px;padding-top:1px;font-size:14px;line-height:15px"><span style="display:inline-block;transform:scaleX(0.87)">19-36</span></div><div class="cell" style="left:190px;top:418px;width:57px;height:16px;background:#ff66ff;color:#000;text-align:left;padding-left:2px;padding-top:1px;font-size:14px;line-height:15px">3дюжи...</div><div class="cell" style="left:248px;top:418px;width:76px;height:16px;background:#ffff00;color:#000;text-align:center;padding-left:0px;padding-top:1px;font-size:14px;line-height:15px">3колонка</div><div class="cell" style="left:325px;top:418px;width:76px;height:16px;background:#fffaa0;color:#000;text-align:center;padding-left:0px;padding-top:1px;font-size:14px;line-height:15px">5сиклайн</div><div class="cell" style="left:402px;top:418px;width:77px;height:16px;background:#33ccff;color:#000;text-align:left;padding-left:2px;padding-top:1px;font-size:14px;line-height:15px">Tiers</div><div class="cell" style="left:8px;top:435px;width:28px;height:16px;background:#c0dcc0;color:#000;text-align:center;padding-left:0px;padding-top:1px;font-size:14px;line-height:15px"><span style="display:inline-block;transform:scaleX(0.87)">19</span></div><div class="cell" style="left:37px;top:435px;width:24px;height:16px;background:#fffaa0;color:#000;text-align:center;padding-left:0px;padding-top:1px;font-size:14px;line-height:15px"><span style="display:inline-block;transform:scaleX(0.87)">25</span></div><div class="cell" style="left:62px;top:435px;width:41px;height:16px;background:#d8005e;color:#ffff00;text-align:center;padding-left:0px;padding-top:1px;font-size:14px;line-height:15px">кра...</div><div class="cell" style="left:104px;top:435px;width:28px;height:16px;background:#66f040;color:#000;text-align:left;padding-left:2px;padding-top:1px;font-size:14px;line-height:15px">неч</div><div class="cell" style="left:133px;top:435px;width:56px;height:16px;background:#ff9966;color:#000;text-align:center;padding-left:0px;padding-top:1px;font-size:14px;line-height:15px"><span style="display:inline-block;transform:scaleX(0.87)">19-36</span></div><div class="cell" style="left:190px;top:435px;width:57px;height:16px;background:#ff66ff;color:#000;text-align:left;padding-left:2px;padding-top:1px;font-size:14px;line-height:15px">3дюжи...</div><div class="cell" style="left:248px;top:435px;width:76px;height:16px;background:#ff00ff;color:#000;text-align:center;padding-left:0px;padding-top:1px;font-size:14px;line-height:15px">1колонка</div><div class="cell" style="left:325px;top:435px;width:76px;height:16px;background:#fffaa0;color:#000;text-align:center;padding-left:0px;padding-top:1px;font-size:14px;line-height:15px">5сиклайн</div><div class="cell" style="left:402px;top:435px;width:77px;height:16px;background:#66f040;color:#000;text-align:left;padding-left:2px;padding-top:1px;font-size:14px;line-height:15px">VdZ</div><div class="cell" style="left:8px;top:452px;width:28px;height:16px;background:#c0dcc0;color:#000;text-align:center;padding-left:0px;padding-top:1px;font-size:14px;line-height:15px"><span style="display:inline-block;transform:scaleX(0.87)">18</span></div><div class="cell" style="left:37px;top:452px;width:24px;height:16px;background:#fffaa0;color:#000;text-align:center;padding-left:0px;padding-top:1px;font-size:14px;line-height:15px"><span style="display:inline-block;transform:scaleX(0.87)">31</span></div><div class="cell" style="left:62px;top:452px;width:41px;height:16px;background:#000;color:#ffff00;text-align:center;padding-left:0px;padding-top:1px;font-size:14px;line-height:15px">черн</div><div class="cell" style="left:104px;top:452px;width:28px;height:16px;background:#66f040;color:#000;text-align:left;padding-left:2px;padding-top:1px;font-size:14px;line-height:15px">неч</div><div class="cell" style="left:133px;top:452px;width:56px;height:16px;background:#ff9966;color:#000;text-align:center;padding-left:0px;padding-top:1px;font-size:14px;line-height:15px"><span style="display:inline-block;transform:scaleX(0.87)">19-36</span></div><div class="cell" style="left:190px;top:452px;width:57px;height:16px;background:#ff66ff;color:#000;text-align:left;padding-left:2px;padding-top:1px;font-size:14px;line-height:15px">3дюжи...</div><div class="cell" style="left:248px;top:452px;width:76px;height:16px;background:#ff00ff;color:#000;text-align:center;padding-left:0px;padding-top:1px;font-size:14px;line-height:15px">1колонка</div><div class="cell" style="left:325px;top:452px;width:76px;height:16px;background:#66ff33;color:#000;text-align:center;padding-left:0px;padding-top:1px;font-size:14px;line-height:15px">6сиклайн</div><div class="cell" style="left:402px;top:452px;width:77px;height:16px;background:#ff9966;color:#000;text-align:left;padding-left:2px;padding-top:1px;font-size:14px;line-height:15px">Orph</div><div class="cell" style="left:8px;top:469px;width:28px;height:16px;background:#c0dcc0;color:#000;text-align:center;padding-left:0px;padding-top:1px;font-size:14px;line-height:15px"><span style="display:inline-block;transform:scaleX(0.87)">17</span></div><div class="cell" style="left:37px;top:469px;width:24px;height:16px;background:#fffaa0;color:#000;text-align:center;padding-left:0px;padding-top:1px;font-size:14px;line-height:15px"><span style="display:inline-block;transform:scaleX(0.87)">16</span></div><div class="cell" style="left:62px;top:469px;width:41px;height:16px;background:#d8005e;color:#ffff00;text-align:center;padding-left:0px;padding-top:1px;font-size:14px;line-height:15px">кра...</div><div class="cell" style="left:104px;top:469px;width:28px;height:16px;background:#fffaa0;color:#000;text-align:left;padding-left:2px;padding-top:1px;font-size:14px;line-height:15px">чет</div><div class="cell" style="left:133px;top:469px;width:56px;height:16px;background:#a0f8d0;color:#000;text-align:center;padding-left:0px;padding-top:1px;font-size:14px;line-height:15px"><span style="display:inline-block;transform:scaleX(0.87)">1-18</span></div><div class="cell" style="left:190px;top:469px;width:57px;height:16px;background:#fffaa0;color:#000;text-align:left;padding-left:2px;padding-top:1px;font-size:14px;line-height:15px">2дюжи...</div><div class="cell" style="left:248px;top:469px;width:76px;height:16px;background:#ff00ff;color:#000;text-align:center;padding-left:0px;padding-top:1px;font-size:14px;line-height:15px">1колонка</div><div class="cell" style="left:325px;top:469px;width:76px;height:16px;background:#ff66ff;color:#000;text-align:center;padding-left:0px;padding-top:1px;font-size:14px;line-height:15px">3сиклайн</div><div class="cell" style="left:402px;top:469px;width:77px;height:16px;background:#33ccff;color:#000;text-align:left;padding-left:2px;padding-top:1px;font-size:14px;line-height:15px">Tiers</div><div class="cell" style="left:8px;top:486px;width:28px;height:16px;background:#c0dcc0;color:#000;text-align:center;padding-left:0px;padding-top:1px;font-size:14px;line-height:15px"><span style="display:inline-block;transform:scaleX(0.87)">16</span></div><div class="cell" style="left:37px;top:486px;width:24px;height:16px;background:#fffaa0;color:#000;text-align:center;padding-left:0px;padding-top:1px;font-size:14px;line-height:15px"><span style="display:inline-block;transform:scaleX(0.87)">31</span></div><div class="cell" style="left:62px;top:486px;width:41px;height:16px;background:#000;color:#ffff00;text-align:center;padding-left:0px;padding-top:1px;font-size:14px;line-height:15px">черн</div><div class="cell" style="left:104px;top:486px;width:28px;height:16px;background:#66f040;color:#000;text-align:left;padding-left:2px;padding-top:1px;font-size:14px;line-height:15px">неч</div><div class="cell" style="left:133px;top:486px;width:56px;height:16px;background:#ff9966;color:#000;text-align:center;padding-left:0px;padding-top:1px;font-size:14px;line-height:15px"><span style="display:inline-block;transform:scaleX(0.87)">19-36</span></div><div class="cell" style="left:190px;top:486px;width:57px;height:16px;background:#ff66ff;color:#000;text-align:left;padding-left:2px;padding-top:1px;font-size:14px;line-height:15px">3дюжи...</div><div class="cell" style="left:248px;top:486px;width:76px;height:16px;background:#ff00ff;color:#000;text-align:center;padding-left:0px;padding-top:1px;font-size:14px;line-height:15px">1колонка</div><div class="cell" style="left:325px;top:486px;width:76px;height:16px;background:#66ff33;color:#000;text-align:center;padding-left:0px;padding-top:1px;font-size:14px;line-height:15px">6сиклайн</div><div class="cell" style="left:402px;top:486px;width:77px;height:16px;background:#ff9966;color:#000;text-align:left;padding-left:2px;padding-top:1px;font-size:14px;line-height:15px">Orph</div><div class="cell" style="left:8px;top:503px;width:28px;height:16px;background:#c0dcc0;color:#000;text-align:center;padding-left:0px;padding-top:1px;font-size:14px;line-height:15px"><span style="display:inline-block;transform:scaleX(0.87)">15</span></div><div class="cell" style="left:37px;top:503px;width:24px;height:16px;background:#fffaa0;color:#000;text-align:center;padding-left:0px;padding-top:1px;font-size:14px;line-height:15px"><span style="display:inline-block;transform:scaleX(0.87)">12</span></div><div class="cell" style="left:62px;top:503px;width:41px;height:16px;background:#d8005e;color:#ffff00;text-align:center;padding-left:0px;padding-top:1px;font-size:14px;line-height:15px">кра...</div><div class="cell" style="left:104px;top:503px;width:28px;height:16px;background:#fffaa0;color:#000;text-align:left;padding-left:2px;padding-top:1px;font-size:14px;line-height:15px">чет</div><div class="cell" style="left:133px;top:503px;width:56px;height:16px;background:#a0f8d0;color:#000;text-align:center;padding-left:0px;padding-top:1px;font-size:14px;line-height:15px"><span style="display:inline-block;transform:scaleX(0.87)">1-18</span></div><div class="cell" style="left:190px;top:503px;width:57px;height:16px;background:#33ccff;color:#000;text-align:left;padding-left:2px;padding-top:1px;font-size:14px;line-height:15px">1дюжи...</div><div class="cell" style="left:248px;top:503px;width:76px;height:16px;background:#ffff00;color:#000;text-align:center;padding-left:0px;padding-top:1px;font-size:14px;line-height:15px">3колонка</div><div class="cell" style="left:325px;top:503px;width:76px;height:16px;background:#ff6666;color:#000;text-align:center;padding-left:0px;padding-top:1px;font-size:14px;line-height:15px">2сиклайн</div><div class="cell" style="left:402px;top:503px;width:77px;height:16px;background:#a0f8d0;color:#000;text-align:left;padding-left:2px;padding-top:1px;font-size:14px;line-height:15px">VdZ_zch</div><div class="cell" style="left:8px;top:520px;width:28px;height:16px;background:#c0dcc0;color:#000;text-align:center;padding-left:0px;padding-top:1px;font-size:14px;line-height:15px"><span style="display:inline-block;transform:scaleX(0.87)">14</span></div><div class="cell" style="left:37px;top:520px;width:24px;height:16px;background:#fffaa0;color:#000;text-align:center;padding-left:0px;padding-top:1px;font-size:14px;line-height:15px"><span style="display:inline-block;transform:scaleX(0.87)">17</span></div><div class="cell" style="left:62px;top:520px;width:41px;height:16px;background:#000;color:#ffff00;text-align:center;padding-left:0px;padding-top:1px;font-size:14px;line-height:15px">черн</div><div class="cell" style="left:104px;top:520px;width:28px;height:16px;background:#66f040;color:#000;text-align:left;padding-left:2px;padding-top:1px;font-size:14px;line-height:15px">неч</div><div class="cell" style="left:133px;top:520px;width:56px;height:16px;background:#a0f8d0;color:#000;text-align:center;padding-left:0px;padding-top:1px;font-size:14px;line-height:15px"><span style="display:inline-block;transform:scaleX(0.87)">1-18</span></div><div class="cell" style="left:190px;top:520px;width:57px;height:16px;background:#fffaa0;color:#000;text-align:left;padding-left:2px;padding-top:1px;font-size:14px;line-height:15px">2дюжи...</div><div class="cell" style="left:248px;top:520px;width:76px;height:16px;background:#00ff00;color:#000;text-align:center;padding-left:0px;padding-top:1px;font-size:14px;line-height:15px">2колонка</div><div class="cell" style="left:325px;top:520px;width:76px;height:16px;background:#ff66ff;color:#000;text-align:center;padding-left:0px;padding-top:1px;font-size:14px;line-height:15px">3сиклайн</div><div class="cell" style="left:402px;top:520px;width:77px;height:16px;background:#ff9966;color:#000;text-align:left;padding-left:2px;padding-top:1px;font-size:14px;line-height:15px">Orph</div><div class="cell" style="left:8px;top:537px;width:28px;height:16px;background:#c0dcc0;color:#000;text-align:center;padding-left:0px;padding-top:1px;font-size:14px;line-height:15px"><span style="display:inline-block;transform:scaleX(0.87)">13</span></div><div class="cell" style="left:37px;top:537px;width:24px;height:16px;background:#fffaa0;color:#000;text-align:center;padding-left:0px;padding-top:1px;font-size:14px;line-height:15px"><span style="display:inline-block;transform:scaleX(0.87)">21</span></div><div class="cell" style="left:62px;top:537px;width:41px;height:16px;background:#d8005e;color:#ffff00;text-align:center;padding-left:0px;padding-top:1px;font-size:14px;line-height:15px">кра...</div><div class="cell" style="left:104px;top:537px;width:28px;height:16px;background:#66f040;color:#000;text-align:left;padding-left:2px;padding-top:1px;font-size:14px;line-height:15px">неч</div><div class="cell" style="left:133px;top:537px;width:56px;height:16px;background:#ff9966;color:#000;text-align:center;padding-left:0px;padding-top:1px;font-size:14px;line-height:15px"><span style="display:inline-block;transform:scaleX(0.87)">19-36</span></div><div class="cell" style="left:190px;top:537px;width:57px;height:16px;background:#fffaa0;color:#000;text-align:left;padding-left:2px;padding-top:1px;font-size:14px;line-height:15px">2дюжи...</div><div class="cell" style="left:248px;top:537px;width:76px;height:16px;background:#ffff00;color:#000;text-align:center;padding-left:0px;padding-top:1px;font-size:14px;line-height:15px">3колонка</div><div class="cell" style="left:325px;top:537px;width:76px;height:16px;background:#a0f8d0;color:#000;text-align:center;padding-left:0px;padding-top:1px;font-size:14px;line-height:15px">4сиклайн</div><div class="cell" style="left:402px;top:537px;width:77px;height:16px;background:#66f040;color:#000;text-align:left;padding-left:2px;padding-top:1px;font-size:14px;line-height:15px">VdZ</div><div class="cell" style="left:8px;top:554px;width:28px;height:16px;background:#c0dcc0;color:#000;text-align:center;padding-left:0px;padding-top:1px;font-size:14px;line-height:15px"><span style="display:inline-block;transform:scaleX(0.87)">12</span></div><div class="cell" style="left:37px;top:554px;width:24px;height:16px;background:#fffaa0;color:#000;text-align:center;padding-left:0px;padding-top:1px;font-size:14px;line-height:15px"><span style="display:inline-block;transform:scaleX(0.87)">2</span></div><div class="cell" style="left:62px;top:554px;width:41px;height:16px;background:#000;color:#ffff00;text-align:center;padding-left:0px;padding-top:1px;font-size:14px;line-height:15px">черн</div><div class="cell" style="left:104px;top:554px;width:28px;height:16px;background:#fffaa0;color:#000;text-align:left;padding-left:2px;padding-top:1px;font-size:14px;line-height:15px">чет</div><div class="cell" style="left:133px;top:554px;width:56px;height:16px;background:#a0f8d0;color:#000;text-align:center;padding-left:0px;padding-top:1px;font-size:14px;line-height:15px"><span style="display:inline-block;transform:scaleX(0.87)">1-18</span></div><div class="cell" style="left:190px;top:554px;width:57px;height:16px;background:#33ccff;color:#000;text-align:left;padding-left:2px;padding-top:1px;font-size:14px;line-height:15px">1дюжи...</div><div class="cell" style="left:248px;top:554px;width:76px;height:16px;background:#00ff00;color:#000;text-align:center;padding-left:0px;padding-top:1px;font-size:14px;line-height:15px">2колонка</div><div class="cell" style="left:325px;top:554px;width:76px;height:16px;background:#33ccff;color:#000;text-align:center;padding-left:0px;padding-top:1px;font-size:14px;line-height:15px">1сиклайн</div><div class="cell" style="left:402px;top:554px;width:77px;height:16px;background:#66f040;color:#000;text-align:left;padding-left:2px;padding-top:1px;font-size:14px;line-height:15px">VdZ</div><div class="cell" style="left:8px;top:571px;width:28px;height:16px;background:#c0dcc0;color:#000;text-align:center;padding-left:0px;padding-top:1px;font-size:14px;line-height:15px"><span style="display:inline-block;transform:scaleX(0.87)">11</span></div><div class="cell" style="left:37px;top:571px;width:24px;height:16px;background:#fffaa0;color:#000;text-align:center;padding-left:0px;padding-top:1px;font-size:14px;line-height:15px"><span style="display:inline-block;transform:scaleX(0.87)">20</span></div><div class="cell" style="left:62px;top:571px;width:41px;height:16px;background:#000;color:#ffff00;text-align:center;padding-left:0px;padding-top:1px;font-size:14px;line-height:15px">черн</div><div class="cell" style="left:104px;top:571px;width:28px;height:16px;background:#fffaa0;color:#000;text-align:left;padding-left:2px;padding-top:1px;font-size:14px;line-height:15px">чет</div><div class="cell" style="left:133px;top:571px;width:56px;height:16px;background:#ff9966;color:#000;text-align:center;padding-left:0px;padding-top:1px;font-size:14px;line-height:15px"><span style="display:inline-block;transform:scaleX(0.87)">19-36</span></div><div class="cell" style="left:190px;top:571px;width:57px;height:16px;background:#fffaa0;color:#000;text-align:left;padding-left:2px;padding-top:1px;font-size:14px;line-height:15px">2дюжи...</div><div class="cell" style="left:248px;top:571px;width:76px;height:16px;background:#00ff00;color:#000;text-align:center;padding-left:0px;padding-top:1px;font-size:14px;line-height:15px">2колонка</div><div class="cell" style="left:325px;top:571px;width:76px;height:16px;background:#a0f8d0;color:#000;text-align:center;padding-left:0px;padding-top:1px;font-size:14px;line-height:15px">4сиклайн</div><div class="cell" style="left:402px;top:571px;width:77px;height:16px;background:#ff9966;color:#000;text-align:left;padding-left:2px;padding-top:1px;font-size:14px;line-height:15px">Orph</div><div class="cell" style="left:8px;top:588px;width:28px;height:16px;background:#c0dcc0;color:#000;text-align:center;padding-left:0px;padding-top:1px;font-size:14px;line-height:15px"><span style="display:inline-block;transform:scaleX(0.87)">10</span></div><div class="cell" style="left:37px;top:588px;width:24px;height:16px;background:#fffaa0;color:#000;text-align:center;padding-left:0px;padding-top:1px;font-size:14px;line-height:15px"><span style="display:inline-block;transform:scaleX(0.87)">14</span></div><div class="cell" style="left:62px;top:588px;width:41px;height:16px;background:#d8005e;color:#ffff00;text-align:center;padding-left:0px;padding-top:1px;font-size:14px;line-height:15px">кра...</div><div class="cell" style="left:104px;top:588px;width:28px;height:16px;background:#fffaa0;color:#000;text-align:left;padding-left:2px;padding-top:1px;font-size:14px;line-height:15px">чет</div><div class="cell" style="left:133px;top:588px;width:56px;height:16px;background:#a0f8d0;color:#000;text-align:center;padding-left:0px;padding-top:1px;font-size:14px;line-height:15px"><span style="display:inline-block;transform:scaleX(0.87)">1-18</span></div><div class="cell" style="left:190px;top:588px;width:57px;height:16px;background:#fffaa0;color:#000;text-align:left;padding-left:2px;padding-top:1px;font-size:14px;line-height:15px">2дюжи...</div><div class="cell" style="left:248px;top:588px;width:76px;height:16px;background:#00ff00;color:#000;text-align:center;padding-left:0px;padding-top:1px;font-size:14px;line-height:15px">2колонка</div><div class="cell" style="left:325px;top:588px;width:76px;height:16px;background:#ff66ff;color:#000;text-align:center;padding-left:0px;padding-top:1px;font-size:14px;line-height:15px">3сиклайн</div><div class="cell" style="left:402px;top:588px;width:77px;height:16px;background:#ff9966;color:#000;text-align:left;padding-left:2px;padding-top:1px;font-size:14px;line-height:15px">Orph</div><div class="cell" style="left:8px;top:605px;width:28px;height:16px;background:#c0dcc0;color:#000;text-align:center;padding-left:0px;padding-top:1px;font-size:14px;line-height:15px"><span style="display:inline-block;transform:scaleX(0.87)">9</span></div><div class="cell" style="left:37px;top:605px;width:24px;height:16px;background:#fffaa0;color:#000;text-align:center;padding-left:0px;padding-top:1px;font-size:14px;line-height:15px"><span style="display:inline-block;transform:scaleX(0.87)">28</span></div><div class="cell" style="left:62px;top:605px;width:41px;height:16px;background:#000;color:#ffff00;text-align:center;padding-left:0px;padding-top:1px;font-size:14px;line-height:15px">черн</div><div class="cell" style="left:104px;top:605px;width:28px;height:16px;background:#fffaa0;color:#000;text-align:left;padding-left:2px;padding-top:1px;font-size:14px;line-height:15px">чет</div><div class="cell" style="left:133px;top:605px;width:56px;height:16px;background:#ff9966;color:#000;text-align:center;padding-left:0px;padding-top:1px;font-size:14px;line-height:15px"><span style="display:inline-block;transform:scaleX(0.87)">19-36</span></div><div class="cell" style="left:190px;top:605px;width:57px;height:16px;background:#ff66ff;color:#000;text-align:left;padding-left:2px;padding-top:1px;font-size:14px;line-height:15px">3дюжи...</div><div class="cell" style="left:248px;top:605px;width:76px;height:16px;background:#ff00ff;color:#000;text-align:center;padding-left:0px;padding-top:1px;font-size:14px;line-height:15px">1колонка</div><div class="cell" style="left:325px;top:605px;width:76px;height:16px;background:#fffaa0;color:#000;text-align:center;padding-left:0px;padding-top:1px;font-size:14px;line-height:15px">5сиклайн</div><div class="cell" style="left:402px;top:605px;width:77px;height:16px;background:#66f040;color:#000;text-align:left;padding-left:2px;padding-top:1px;font-size:14px;line-height:15px">VdZ</div><div class="cell" style="left:8px;top:622px;width:28px;height:16px;background:#c0dcc0;color:#000;text-align:center;padding-left:0px;padding-top:1px;font-size:14px;line-height:15px"><span style="display:inline-block;transform:scaleX(0.87)">8</span></div><div class="cell" style="left:37px;top:622px;width:24px;height:16px;background:#fffaa0;color:#000;text-align:center;padding-left:0px;padding-top:1px;font-size:14px;line-height:15px"><span style="display:inline-block;transform:scaleX(0.87)">18</span></div><div class="cell" style="left:62px;top:622px;width:41px;height:16px;background:#d8005e;color:#ffff00;text-align:center;padding-left:0px;padding-top:1px;font-size:14px;line-height:15px">кра...</div><div class="cell" style="left:104px;top:622px;width:28px;height:16px;background:#fffaa0;color:#000;text-align:left;padding-left:2px;padding-top:1px;font-size:14px;line-height:15px">чет</div><div class="cell" style="left:133px;top:622px;width:56px;height:16px;background:#a0f8d0;color:#000;text-align:center;padding-left:0px;padding-top:1px;font-size:14px;line-height:15px"><span style="display:inline-block;transform:scaleX(0.87)">1-18</span></div><div class="cell" style="left:190px;top:622px;width:57px;height:16px;background:#fffaa0;color:#000;text-align:left;padding-left:2px;padding-top:1px;font-size:14px;line-height:15px">2дюжи...</div><div class="cell" style="left:248px;top:622px;width:76px;height:16px;background:#ffff00;color:#000;text-align:center;padding-left:0px;padding-top:1px;font-size:14px;line-height:15px">3колонка</div><div class="cell" style="left:325px;top:622px;width:76px;height:16px;background:#ff66ff;color:#000;text-align:center;padding-left:0px;padding-top:1px;font-size:14px;line-height:15px">3сиклайн</div><div class="cell" style="left:402px;top:622px;width:77px;height:16px;background:#66f040;color:#000;text-align:left;padding-left:2px;padding-top:1px;font-size:14px;line-height:15px">VdZ</div><div class="sb" style="left:481px;top:145px;width:16px;height:494px;background:linear-gradient(to right,#f3f1ec,#fdfdfa)"></div><div class="arr" style="left:482px;top:147px;width:13px;height:14px"><svg style="position:absolute;left:1px;top:3px" width="9" height="6"><path d="M1 5l3.5-3.5 3.5 3.5" fill="none" stroke="#4d6185" stroke-width="2"/></svg></div><div class="arr" style="left:482px;top:162px;width:13px;height:370px"><div style="left:2px;top:181px;width:7px;height:8px;background:repeating-linear-gradient(#eef3fe 0 1px,#8faaf0 1px 2px)"></div></div><div class="arr" style="left:482px;top:623px;width:13px;height:14px"><svg style="position:absolute;left:1px;top:3px" width="9" height="6"><path d="M1 1l3.5 3.5 3.5-3.5" fill="none" stroke="#4d6185" stroke-width="2"/></svg></div><div style="left:6px;top:640px;width:491px;height:1px;background:#aca899"></div><div style="left:498px;top:30px;width:3px;height:727px;background:#aca899"></div><div style="left:501px;top:30px;width:2px;height:727px;background:#fff"></div><div class="rc" style="left:42px;top:645px;width:33px;height:33px"><div class="ball red" style="left:6px;top:7px;width:21px;height:19px">3</div></div><div class="rc" style="left:42px;top:680px;width:33px;height:33px"><div class="ball blk" style="left:6px;top:7px;width:21px;height:19px">2</div></div><div class="rc" style="left:42px;top:715px;width:33px;height:33px"><div class="ball red" style="left:6px;top:7px;width:21px;height:19px">1</div></div><div class="rc" style="left:77px;top:645px;width:33px;height:33px"><div class="ball blk" style="left:6px;top:7px;width:21px;height:19px">6</div></div><div class="rc" style="left:77px;top:680px;width:33px;height:33px"><div class="ball red" style="left:6px;top:7px;width:21px;height:19px">5</div></div><div class="rc" style="left:77px;top:715px;width:33px;height:33px"><div class="ball blk" style="left:6px;top:7px;width:21px;height:19px">4</div></div><div class="rc" style="left:112px;top:645px;width:33px;height:33px"><div class="ball red" style="left:6px;top:7px;width:21px;height:19px">9</div></div><div class="rc" style="left:112px;top:680px;width:33px;height:33px"><div class="ball blk" style="left:6px;top:7px;width:21px;height:19px">8</div></div><div class="rc" style="left:112px;top:715px;width:33px;height:33px"><div class="ball red" style="left:6px;top:7px;width:21px;height:19px">7</div></div><div class="rc" style="left:147px;top:645px;width:33px;height:33px"><div class="ball red" style="left:6px;top:7px;width:21px;height:19px">12</div></div><div class="rc" style="left:147px;top:680px;width:33px;height:33px"><div class="ball blk" style="left:6px;top:7px;width:21px;height:19px">11</div></div><div class="rc" style="left:147px;top:715px;width:33px;height:33px"><div class="ball blk" style="left:6px;top:7px;width:21px;height:19px">10</div></div><div class="rc" style="left:182px;top:645px;width:33px;height:33px"><div class="ball blk" style="left:6px;top:7px;width:21px;height:19px">15</div></div><div class="rc" style="left:182px;top:680px;width:33px;height:33px"><div class="ball red" style="left:6px;top:7px;width:21px;height:19px">14</div></div><div class="rc" style="left:182px;top:715px;width:33px;height:33px"><div class="ball blk" style="left:6px;top:7px;width:21px;height:19px">13</div></div><div class="rc" style="left:217px;top:645px;width:33px;height:33px"><div class="ball red" style="left:6px;top:7px;width:21px;height:19px">18</div></div><div class="rc" style="left:217px;top:680px;width:33px;height:33px"><div class="ball blk" style="left:6px;top:7px;width:21px;height:19px">17</div></div><div class="rc" style="left:217px;top:715px;width:33px;height:33px"><div class="ball red" style="left:6px;top:7px;width:21px;height:19px">16</div></div><div class="rc" style="left:252px;top:645px;width:33px;height:33px"><div class="ball red" style="left:6px;top:7px;width:21px;height:19px">21</div></div><div class="rc" style="left:252px;top:680px;width:33px;height:33px"><div class="ball blk" style="left:6px;top:7px;width:21px;height:19px">20</div></div><div class="rc" style="left:252px;top:715px;width:33px;height:33px"><div class="ball red" style="left:6px;top:7px;width:21px;height:19px">19</div></div><div class="rc" style="left:287px;top:645px;width:33px;height:33px"><div class="ball blk" style="left:6px;top:7px;width:21px;height:19px">24</div></div><div class="rc" style="left:287px;top:680px;width:33px;height:33px"><div class="ball red" style="left:6px;top:7px;width:21px;height:19px">23</div></div><div class="rc" style="left:287px;top:715px;width:33px;height:33px"><div class="ball blk" style="left:6px;top:7px;width:21px;height:19px">22</div></div><div class="rc" style="left:322px;top:645px;width:33px;height:33px"><div class="ball red" style="left:6px;top:7px;width:21px;height:19px">27</div></div><div class="rc" style="left:322px;top:680px;width:33px;height:33px"><div class="ball blk" style="left:6px;top:7px;width:21px;height:19px">26</div></div><div class="rc" style="left:322px;top:715px;width:33px;height:33px"><div class="ball red" style="left:6px;top:7px;width:21px;height:19px">25</div></div><div class="rc" style="left:357px;top:645px;width:33px;height:33px"><div class="ball red" style="left:6px;top:7px;width:21px;height:19px">30</div></div><div class="rc" style="left:357px;top:680px;width:33px;height:33px"><div class="ball blk" style="left:6px;top:7px;width:21px;height:19px">29</div></div><div class="rc" style="left:357px;top:715px;width:33px;height:33px"><div class="ball blk" style="left:6px;top:7px;width:21px;height:19px">28</div></div><div class="rc" style="left:392px;top:645px;width:33px;height:33px"><div class="ball blk" style="left:6px;top:7px;width:21px;height:19px">33</div></div><div class="rc" style="left:392px;top:680px;width:33px;height:33px"><div class="ball red" style="left:6px;top:7px;width:21px;height:19px">32</div></div><div class="rc" style="left:392px;top:715px;width:33px;height:33px"><div class="ball blk" style="left:6px;top:7px;width:21px;height:19px">31</div></div><div class="rc" style="left:427px;top:645px;width:33px;height:33px"><div class="ball red" style="left:6px;top:7px;width:21px;height:19px">36</div></div><div class="rc" style="left:427px;top:680px;width:33px;height:33px"><div class="ball blk" style="left:6px;top:7px;width:21px;height:19px">35</div></div><div class="rc" style="left:427px;top:715px;width:33px;height:33px"><div class="ball red" style="left:6px;top:7px;width:21px;height:19px">34</div></div><div class="rc" style="left:7px;top:680px;width:33px;height:33px"><svg style="position:absolute;left:0;top:0" width="33" height="33"><ellipse cx="16.5" cy="16.5" rx="14.5" ry="11.5" fill="none" stroke="#78d078" stroke-width="0.9" stroke-dasharray="2.2 1.2"/><ellipse cx="16.5" cy="16.5" rx="2.6" ry="6" fill="none" stroke="#e8ffe8" stroke-width="2"/></svg></div><div style="left:503px;top:30px;width:513px;height:2px;background:#fff"></div><div class="t" style="left:506px;top:32px;line-height:14px;font-size:10.8px">Ряд Фибоначчи=1 1 2 3 5 8 13 21 34 55 89 144 233 377 610</div><div class="t" style="left:506px;top:48px;line-height:14px;font-size:10.8px">Ряд Tiers = 5 8 10 11 13 16 23 24 27 30 33 36</div><div class="t" style="left:506px;top:63px;line-height:14px;font-size:10.8px">Ряд VdZ = 0 2 3 4 7 12 15 18 19 21 22 25 26 28 29 32 35</div><div style="left:822px;top:30px;width:193px;height:50px;overflow:hidden;font-size:10.8px"><div class="t" style="left:0;top:2px;line-height:14px">Ряд Мартингейл=1 2 4 8 16 32 64 128 256</div><div class="t" style="left:0;top:18px;line-height:14px">Ряд Orph = 1 6 9 14 17 20 31 34</div><div class="t" style="left:0;top:33px;line-height:14px">Ряд VdZ_zch = 0 3 12 15 26 32 35</div></div><div class="t" style="left:506px;top:82px;font-size:16.3px;font-weight:bold;letter-spacing:0.55px;line-height:21px">Сумма на счете = 0</div><div class="inp" style="left:505px;top:103px;width:171px;height:21px"><div class="t" style="left:2px;top:3px">Частоты по числам</div><div class="arr" style="left:153px;top:2px;width:15px;height:15px"><svg style="position:absolute;left:3px;top:4px" width="9" height="7"><path d="M1 1.5l3.5 3.5 3.5-3.5" fill="none" stroke="#4d6185" stroke-width="2"/></svg></div></div><div style="left:686px;top:81px;width:249px;height:41px;border-top:1px solid #aca899;border-left:1px solid #aca899;border-right:1px solid #fff;border-bottom:1px solid #fff"></div><div class="btn" style="left:691px;top:88px;width:87px;height:25px"><div class="t" style="left:0;width:85px;top:5px;text-align:center">Автоспин старт</div></div><div class="t" style="left:782px;top:87px;line-height:13px">Временная</div><div class="t" style="left:782px;top:100px;line-height:13px">задержка, мс</div><div class="inp" style="left:854px;top:87px;width:73px;height:32px"><div class="t" style="left:3px;top:4px;font-size:18.5px;line-height:20px;">0</div><div class="btn" style="left:52px;top:2px;width:17px;height:13px;border-radius:2px"><svg style="position:absolute;left:4px;top:3px" width="8" height="5"><path d="M0 4.5h7L3.5 0.5z" fill="#000"/></svg></div><div class="btn" style="left:52px;top:16px;width:17px;height:13px;border-radius:2px"><svg style="position:absolute;left:4px;top:3px" width="8" height="5"><path d="M0 0.5h7L3.5 4.5z" fill="#000"/></svg></div></div><div style="left:503px;top:134px;width:513px;height:1px;background:#aca899"></div><div style="left:503px;top:135px;width:513px;height:1px;background:#fff"></div><div style="left:503px;top:162px;width:511px;height:433px;border:1px solid #919b9c;background:linear-gradient(#fcfcfe,#f4f3ee)"></div><div class="tab" style="left:505px;top:144px;width:71px;height:18px;overflow:hidden"><div class="t" style="left:6px;top:3px">Анализатор</div></div><div class="tab" style="left:577px;top:144px;width:69px;height:18px;overflow:hidden"><div class="t" style="left:6px;top:3px">Автоставки</div></div><div class="tab" style="left:761px;top:144px;width:128px;height:18px;overflow:hidden"><div class="t" style="left:6px;top:3px">Функционал PsevdoMS</div></div><div class="tab" style="left:890px;top:144px;width:94px;height:18px;overflow:hidden"><div class="t" style="left:6px;top:3px">Контроль банкролла</div></div><div style="left:646px;top:142px;width:115px;height:21px;border:1px solid #919b9c;border-bottom:none;border-top:none;border-radius:3px 3px 0 0;background:#fcfcfe;overflow:hidden"><div style="left:0;top:0;width:100%;height:3px;background:linear-gradient(#e68b2c,#ffc73c)"></div><div class="t" style="left:8px;top:4px">Частоты по числам</div></div><div class="arr" style="left:982px;top:145px;width:16px;height:14px"><svg style="position:absolute;left:4px;top:3px" width="7" height="8"><path d="M5 0.5L1.5 4 5 7.5" fill="none" stroke="#4d6185" stroke-width="2"/></svg></div><div class="arr" style="left:998px;top:145px;width:16px;height:14px"><svg style="position:absolute;left:4px;top:3px" width="7" height="8"><path d="M1.5 0.5L5 4 1.5 7.5" fill="none" stroke="#4d6185" stroke-width="2"/></svg></div><div style="left:507px;top:166px;width:502px;height:425px;border-top:2px solid #858370;border-left:2px solid #858370;background:#ece9d8"></div><div style="left:991px;top:168px;width:1px;height:423px;background:#aca899"></div><div class="sb" style="left:992px;top:168px;width:17px;height:423px"></div><div class="arr" style="left:993px;top:169px;width:15px;height:15px"><svg style="position:absolute;left:3px;top:4px" width="9" height="6"><path d="M1 5l3.5-3.5 3.5 3.5" fill="none" stroke="#4d6185" stroke-width="2"/></svg></div><div class="arr" style="left:993px;top:186px;width:15px;height:364px"><div style="left:4px;top:176px;width:7px;height:8px;background:repeating-linear-gradient(#eef3fe 0 1px,#8faaf0 1px 2px)"></div></div><div class="arr" style="left:993px;top:574px;width:15px;height:16px"><svg style="position:absolute;left:3px;top:5px" width="9" height="6"><path d="M1 1l3.5 3.5 3.5-3.5" fill="none" stroke="#4d6185" stroke-width="2"/></svg></div><div class="t" style="left:549px;top:171px;font-size:18.5px;letter-spacing:0.5px;line-height:22px;-webkit-text-stroke:0.4px #000">Количество сыгранных спинов = 34</div><div style="left:547px;top:193px;width:1px;height:176px;background:#aca899"></div><div style="left:548px;top:193px;width:1px;height:176px;background:#fff"></div><div class="rc" style="left:553px;top:192px;width:33px;height:33px"><div class="ball red" style="left:6px;top:7px;width:21px;height:19px">3</div></div><div class="rc" style="left:589px;top:192px;width:33px;height:33px"><div class="ball blk" style="left:6px;top:7px;width:21px;height:19px">6</div></div><div class="rc" style="left:625px;top:192px;width:33px;height:33px"><div class="ball red" style="left:6px;top:7px;width:21px;height:19px">9</div></div><div class="rc" style="left:661px;top:192px;width:33px;height:33px"><div class="ball red" style="left:6px;top:7px;width:21px;height:19px">12</div></div><div class="rc" style="left:697px;top:192px;width:33px;height:33px"><div class="ball blk" style="left:6px;top:7px;width:21px;height:19px">15</div></div><div class="rc" style="left:733px;top:192px;width:33px;height:33px"><div class="ball red" style="left:6px;top:7px;width:21px;height:19px">18</div></div><div class="rc" style="left:769px;top:192px;width:33px;height:33px"><div class="ball red" style="left:6px;top:7px;width:21px;height:19px">21</div></div><div class="rc" style="left:805px;top:192px;width:33px;height:33px"><div class="ball blk" style="left:6px;top:7px;width:21px;height:19px">24</div></div><div class="rc" style="left:841px;top:192px;width:33px;height:33px"><div class="ball red" style="left:6px;top:7px;width:21px;height:19px">27</div></div><div class="rc" style="left:877px;top:192px;width:33px;height:33px"><div class="ball red" style="left:6px;top:7px;width:21px;height:19px">30</div></div><div class="rc" style="left:913px;top:192px;width:33px;height:33px"><div class="ball blk" style="left:6px;top:7px;width:21px;height:19px">33</div></div><div class="rc" style="left:949px;top:192px;width:33px;height:33px"><div class="ball red" style="left:6px;top:7px;width:21px;height:19px">36</div></div><div class="rc" style="left:553px;top:250px;width:33px;height:33px"><div class="ball blk" style="left:6px;top:7px;width:21px;height:19px">2</div></div><div class="rc" style="left:589px;top:250px;width:33px;height:33px"><div class="ball red" style="left:6px;top:7px;width:21px;height:19px">5</div></div><div class="rc" style="left:625px;top:250px;width:33px;height:33px"><div class="ball blk" style="left:6px;top:7px;width:21px;height:19px">8</div></div><div class="rc" style="left:661px;top:250px;width:33px;height:33px"><div class="ball blk" style="left:6px;top:7px;width:21px;height:19px">11</div></div><div class="rc" style="left:697px;top:250px;width:33px;height:33px"><div class="ball red" style="left:6px;top:7px;width:21px;height:19px">14</div></div><div class="rc" style="left:733px;top:250px;width:33px;height:33px"><div class="ball blk" style="left:6px;top:7px;width:21px;height:19px">17</div></div><div class="rc" style="left:769px;top:250px;width:33px;height:33px"><div class="ball blk" style="left:6px;top:7px;width:21px;height:19px">20</div></div><div class="rc" style="left:805px;top:250px;width:33px;height:33px"><div class="ball red" style="left:6px;top:7px;width:21px;height:19px">23</div></div><div class="rc" style="left:841px;top:250px;width:33px;height:33px"><div class="ball blk" style="left:6px;top:7px;width:21px;height:19px">26</div></div><div class="rc" style="left:877px;top:250px;width:33px;height:33px"><div class="ball blk" style="left:6px;top:7px;width:21px;height:19px">29</div></div><div class="rc" style="left:913px;top:250px;width:33px;height:33px"><div class="ball red" style="left:6px;top:7px;width:21px;height:19px">32</div></div><div class="rc" style="left:949px;top:250px;width:33px;height:33px"><div class="ball blk" style="left:6px;top:7px;width:21px;height:19px">35</div></div><div class="rc" style="left:553px;top:314px;width:33px;height:33px"><div class="ball red" style="left:6px;top:7px;width:21px;height:19px">1</div></div><div class="rc" style="left:589px;top:314px;width:33px;height:33px"><div class="ball blk" style="left:6px;top:7px;width:21px;height:19px">4</div></div><div class="rc" style="left:625px;top:314px;width:33px;height:33px"><div class="ball red" style="left:6px;top:7px;width:21px;height:19px">7</div></div><div class="rc" style="left:661px;top:314px;width:33px;height:33px"><div class="ball blk" style="left:6px;top:7px;width:21px;height:19px">10</div></div><div class="rc" style="left:697px;top:314px;width:33px;height:33px"><div class="ball blk" style="left:6px;top:7px;width:21px;height:19px">13</div></div><div class="rc" style="left:733px;top:314px;width:33px;height:33px"><div class="ball red" style="left:6px;top:7px;width:21px;height:19px">16</div></div><div class="rc" style="left:769px;top:314px;width:33px;height:33px"><div class="ball red" style="left:6px;top:7px;width:21px;height:19px">19</div></div><div class="rc" style="left:805px;top:314px;width:33px;height:33px"><div class="ball blk" style="left:6px;top:7px;width:21px;height:19px">22</div></div><div class="rc" style="left:841px;top:314px;width:33px;height:33px"><div class="ball red" style="left:6px;top:7px;width:21px;height:19px">25</div></div><div class="rc" style="left:877px;top:314px;width:33px;height:33px"><div class="ball blk" style="left:6px;top:7px;width:21px;height:19px">28</div></div><div class="rc" style="left:913px;top:314px;width:33px;height:33px"><div class="ball blk" style="left:6px;top:7px;width:21px;height:19px">31</div></div><div class="rc" style="left:949px;top:314px;width:33px;height:33px"><div class="ball red" style="left:6px;top:7px;width:21px;height:19px">34</div></div><div class="t cnt" style="left:549px;top:230px;line-height:14px">1</div><div class="t cnt" style="left:585px;top:230px;line-height:14px">0</div><div class="t cnt" style="left:621px;top:230px;line-height:14px">1</div><div class="t cnt" style="left:657px;top:230px;line-height:14px">1</div><div class="t cnt" style="left:693px;top:230px;line-height:14px">0</div><div class="t cnt" style="left:729px;top:230px;line-height:14px">2</div><div class="t cnt" style="left:765px;top:230px;line-height:14px">1</div><div class="t cnt" style="left:801px;top:230px;line-height:14px">1</div><div class="t cnt" style="left:837px;top:230px;line-height:14px">2</div><div class="t cnt" style="left:873px;top:230px;line-height:14px">0</div><div class="t cnt" style="left:909px;top:230px;line-height:14px">0</div><div class="t cnt" style="left:942px;top:229px;line-height:14px">0</div><div class="t cnt" style="left:549px;top:289px;line-height:14px">4</div><div class="t cnt" style="left:585px;top:289px;line-height:14px">0</div><div class="t cnt" style="left:621px;top:289px;line-height:14px">1</div><div class="t cnt" style="left:657px;top:289px;line-height:14px">1</div><div class="t cnt" style="left:693px;top:289px;line-height:14px">1</div><div class="t cnt" style="left:729px;top:289px;line-height:14px">2</div><div class="t cnt" style="left:765px;top:289px;line-height:14px">1</div><div class="t cnt" style="left:801px;top:289px;line-height:14px">1</div><div class="t cnt" style="left:837px;top:289px;line-height:14px">1</div><div class="t cnt" style="left:873px;top:289px;line-height:14px">0</div><div class="t cnt" style="left:909px;top:289px;line-height:14px">0</div><div class="t cnt" style="left:945px;top:289px;line-height:14px">0</div><div class="t cnt" style="left:549px;top:352px;line-height:14px">0</div><div class="t cnt" style="left:585px;top:352px;line-height:14px">0</div><div class="t cnt" style="left:621px;top:352px;line-height:14px">0</div><div class="t cnt" style="left:657px;top:352px;line-height:14px">0</div><div class="t cnt" style="left:693px;top:352px;line-height:14px">0</div><div class="t cnt" style="left:729px;top:352px;line-height:14px">2</div><div class="t cnt" style="left:765px;top:352px;line-height:14px">1</div><div class="t cnt" style="left:801px;top:352px;line-height:14px">1</div><div class="t cnt" style="left:837px;top:352px;line-height:14px">2</div><div class="t cnt" style="left:873px;top:352px;line-height:14px">1</div><div class="t cnt" style="left:909px;top:352px;line-height:14px">3</div><div class="t cnt" style="left:942px;top:351px;line-height:14px">2</div><div class="rc" style="left:512px;top:251px;width:33px;height:33px"><svg style="position:absolute;left:0;top:0" width="33" height="33"><ellipse cx="16.5" cy="16.5" rx="14.5" ry="11.5" fill="none" stroke="#78d078" stroke-width="0.9" stroke-dasharray="2.2 1.2"/><ellipse cx="16.5" cy="16.5" rx="2.6" ry="6" fill="none" stroke="#e8ffe8" stroke-width="2"/></svg></div><div class="t cnt" style="left:504px;top:289px;line-height:14px">1</div><div style="left:549px;top:247px;width:442px;height:1px;background:#aca899"></div><div style="left:549px;top:248px;width:442px;height:1px;background:#fff"></div><div style="left:549px;top:311px;width:442px;height:1px;background:#aca899"></div><div style="left:549px;top:312px;width:442px;height:1px;background:#fff"></div><div style="left:509px;top:376px;width:482px;height:1px;background:#aca899"></div><div style="left:509px;top:377px;width:482px;height:1px;background:#fff"></div><div class="t" style="left:526px;top:402px;font-size:16.5px;line-height:19px">Показать за последние</div><div class="inp" style="left:710px;top:394px;width:73px;height:31px"><div class="t" style="left:3px;top:5px;font-size:19px;line-height:21px;">34</div><div class="btn" style="left:52px;top:2px;width:17px;height:12px;border-radius:2px"><svg style="position:absolute;left:4px;top:3px" width="8" height="5"><path d="M0 4.5h7L3.5 0.5z" fill="#000"/></svg></div><div class="btn" style="left:52px;top:15px;width:17px;height:12px;border-radius:2px"><svg style="position:absolute;left:4px;top:3px" width="8" height="5"><path d="M0 0.5h7L3.5 4.5z" fill="#000"/></svg></div></div><div class="t" style="left:790px;top:403px;font-size:16.5px;line-height:19px">спин</div><div class="btn" style="left:838px;top:394px;width:79px;height:31px"><div class="t" style="left:0;width:77px;top:7px;text-align:center;font-weight:bold;font-size:13px;letter-spacing:1.2px;line-height:15px">Показать</div></div><div class="btn" style="left:518px;top:442px;width:111px;height:39px"><div style="left:2px;top:2px;width:105px;height:33px;border:1px dotted #000"></div><div class="t" style="left:0;width:109px;top:4px;text-align:center;font-weight:bold;font-size:13px;letter-spacing:1px;line-height:15px">Несыгравшие<br>номера</div></div><div class="t" style="left:637px;top:436px;font-size:11px;line-height:13px">Строка невыпавших номеров. Разделитель: "+"</div><div class="inp" style="left:637px;top:452px;width:337px;height:28px"><div class="t" style="left:3px;top:4px;font-size:15.8px;line-height:19px">1+4+5+6+7+10+13+15+29+30+32+33+35+36</div></div><div class="btn" style="left:518px;top:486px;width:199px;height:39px"><svg style="position:absolute;left:9px;top:10px" width="19" height="19"><ellipse cx="9.5" cy="9.5" rx="8.6" ry="8.3" fill="#1cd848" stroke="#000" stroke-width="1.8"/><ellipse cx="6.5" cy="7" rx="1" ry="2.2" fill="none" stroke="#000" stroke-width="1"/><ellipse cx="12.5" cy="7" rx="1" ry="2.2" fill="none" stroke="#000" stroke-width="1"/><ellipse cx="9.5" cy="11.5" rx="1" ry="2.2" fill="none" stroke="#000" stroke-width="1"/></svg><div class="t" style="left:20px;width:177px;top:3px;text-align:center;font-weight:bold;font-size:13px;letter-spacing:1px;line-height:16px">Автоставка на<br>несыгравшие номера</div></div><div style="left:509px;top:537px;width:482px;height:1px;background:#aca899"></div><div style="left:509px;top:538px;width:482px;height:1px;background:#fff"></div><div class="t" style="left:526px;top:555px;font-size:16.5px;line-height:19px">Показать частоты невыпадения чисел</div><div class="btn" style="left:830px;top:548px;width:79px;height:30px"><div class="t" style="left:0;width:77px;top:6px;text-align:center;font-weight:bold;font-size:13px;letter-spacing:1.2px;line-height:15px">Показать</div></div><div style="left:503px;top:595px;width:513px;height:1px;background:#aca899"></div><div style="left:503px;top:596px;width:513px;height:2px;background:#fff"></div><div style="left:503px;top:617px;width:511px;height:137px;border:1px solid #919b9c;background:linear-gradient(#fcfcfe,#f4f3ee)"></div><div class="tab" style="left:505px;top:600px;width:220px;height:17px;overflow:hidden"><div class="t" style="left:6px;top:3px">Частота - Zero, шансы, дюжины, колонки</div></div><div class="tab" style="left:726px;top:600px;width:159px;height:17px;overflow:hidden"><div class="t" style="left:6px;top:3px">Частота - сиклайны, сектора</div></div><div style="left:885px;top:598px;width:45px;height:20px;border:1px solid #919b9c;border-bottom:none;border-top:none;border-radius:3px 3px 0 0;background:#fcfcfe;overflow:hidden"><div style="left:0;top:0;width:100%;height:3px;background:linear-gradient(#e68b2c,#ffc73c)"></div><div class="t" style="left:7px;top:3px">MD5</div></div><div class="btn" style="left:508px;top:628px;width:71px;height:90px"><div class="t" style="left:0;width:69px;top:26px;text-align:center;line-height:13px;font-size:11.2px;">Очистка<br>Вставка<br>Расчет MD5</div></div><div class="btn" style="left:583px;top:628px;width:79px;height:18px"><div class="t" style="left:0;width:77px;top:3px;text-align:center;line-height:13px;font-size:11.2px;">Очистить</div></div><div class="btn" style="left:583px;top:652px;width:79px;height:31px"><div class="t" style="left:0;width:77px;top:3px;text-align:center;line-height:13px;font-size:11.2px;">Очистить и<br>вставить</div></div><div class="btn" style="left:583px;top:687px;width:79px;height:31px"><div class="t" style="left:0;width:77px;top:9px;text-align:center;line-height:13px;font-size:11.2px;">Расчет MD5</div></div><div class="btn" style="left:511px;top:723px;width:148px;height:28px"><div class="t" style="left:0;width:146px;top:2px;text-align:center;line-height:13px;font-size:11.2px;">Очистить и&nbsp; вставить<br>во вспом. строку</div></div><div class="t" style="left:667px;top:622px;font-size:11px">Исходная строка</div><div class="inp" style="left:667px;top:638px;width:285px;height:21px"></div><div class="t" style="left:667px;top:667px;font-size:11px">Выходная строка MD5</div><div class="inp" style="left:667px;top:683px;width:285px;height:21px"></div><div class="t" style="left:667px;top:707px;font-size:11px">Вспомогательная строка: сюда можно все скопировать</div><div class="inp" style="left:667px;top:723px;width:285px;height:21px"></div><div style="left:803px;top:664px;width:13px;height:13px;border:1px solid #1c5180;background:linear-gradient(135deg,#dcdcd7,#fff)"></div><div class="t" style="left:820px;top:664px;font-size:11px">регистр&nbsp; - маленький</div><div class="btn" style="left:956px;top:639px;width:23px;height:24px"><div style="left:2px;top:2px;width:18px;height:18px;border-radius:50%;background:#18e048;border:2px solid #000"><div class="t" style="left:0;width:14px;top:1px;text-align:center;font-size:7px;line-height:6px;letter-spacing:0.5px">MA<br>5&nbsp;</div></div></div><div class="btn" style="left:956px;top:719px;width:23px;height:24px"><div style="left:2px;top:2px;width:18px;height:18px;border-radius:50%;background:#18e048;border:2px solid #000"><div class="t" style="left:0;width:14px;top:1px;text-align:center;font-size:7px;line-height:6px;letter-spacing:0.5px">MA<br>5&nbsp;</div><svg style="position:absolute;left:9px;top:9px" width="6" height="7"><path d="M0 0l5 3.5L0 7z" fill="#1030f0"/></svg></div></div><div style="left:1015px;top:30px;width:2px;height:727px;background:#b8b194"></div><div style="left:4px;top:755px;width:1013px;height:1px;background:#d0cdbd"></div><div style="left:4px;top:756px;width:1013px;height:1px;background:#aca899"></div><div style="left:4px;top:757px;width:1013px;height:1px;background:#bdbaaa"></div><div style="left:4px;top:758px;width:1013px;height:1px;background:#d8d5c5"></div><div class="t" style="left:5px;top:768px;line-height:13px;font-size:11.1px">Загружен файл польз. набора ставок:D:\Alex\KLC\На отсылку HR\Set\каре.txt</div><div style="left:702px;top:761px;width:1px;height:24px;background:#c5c2b2"></div><div style="left:703px;top:761px;width:1px;height:24px;background:#fff"></div><div class="t" style="left:708px;top:768px;line-height:13px;font-size:11.1px">Автосмещение : 14</div><div style="left:822px;top:761px;width:1px;height:24px;background:#c5c2b2"></div><div style="left:823px;top:761px;width:1px;height:24px;background:#fff"></div><div class="t" style="left:828px;top:768px;line-height:13px;font-size:11.1px">Исходное: 16</div><svg style="position:absolute;left:1004px;top:774px" width="12" height="12"><g fill="#aca899"><rect x="9" y="1" width="2" height="2"/><rect x="5" y="5" width="2" height="2"/><rect x="9" y="5" width="2" height="2"/><rect x="1" y="9" width="2" height="2"/><rect x="5" y="9" width="2" height="2"/><rect x="9" y="9" width="2" height="2"/></g></svg></body></html>
